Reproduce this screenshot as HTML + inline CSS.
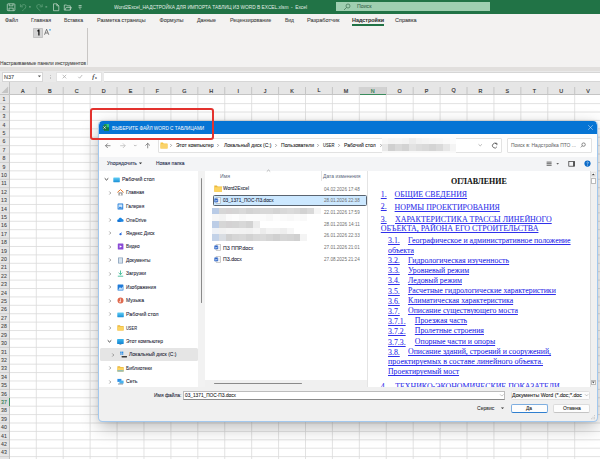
<!DOCTYPE html><html><head><meta charset="utf-8"><style>html,body{margin:0;padding:0;width:600px;height:459px;overflow:hidden;position:relative;background:#fff;font-family:"Liberation Sans",sans-serif}</style></head><body>
<div style="position:absolute;left:0px;top:0px;width:600px;height:14px;background:#217346"></div>
<div style="position:absolute;left:0px;top:14px;width:600px;height:53px;background:#f3f2f1"></div>
<div style="position:absolute;left:0px;top:67px;width:600px;height:4px;background:#e1dfdd"></div>
<div style="position:absolute;left:0px;top:71px;width:600px;height:11.5px;background:#eaeaea"></div>
<div style="position:absolute;left:0px;top:82px;width:600px;height:377px;background:#ffffff"></div>
<div style="position:absolute;left:0px;top:82px;width:600px;height:12.5px;background:#e6e6e6"></div>
<div style="position:absolute;left:0px;top:82px;width:9.5px;height:377px;background:#e6e6e6"></div>
<svg style="position:absolute;left:0;top:0" width="600" height="459"><line x1="9.38" y1="94.5" x2="9.38" y2="459" stroke="#dadada" stroke-width="0.8"/><line x1="9.38" y1="87" x2="9.38" y2="94.5" stroke="#bdbdbd" stroke-width="0.8"/><line x1="36.30" y1="94.5" x2="36.30" y2="459" stroke="#dadada" stroke-width="0.8"/><line x1="36.30" y1="87" x2="36.30" y2="94.5" stroke="#bdbdbd" stroke-width="0.8"/><line x1="63.22" y1="94.5" x2="63.22" y2="459" stroke="#dadada" stroke-width="0.8"/><line x1="63.22" y1="87" x2="63.22" y2="94.5" stroke="#bdbdbd" stroke-width="0.8"/><line x1="90.14" y1="94.5" x2="90.14" y2="459" stroke="#dadada" stroke-width="0.8"/><line x1="90.14" y1="87" x2="90.14" y2="94.5" stroke="#bdbdbd" stroke-width="0.8"/><line x1="117.06" y1="94.5" x2="117.06" y2="459" stroke="#dadada" stroke-width="0.8"/><line x1="117.06" y1="87" x2="117.06" y2="94.5" stroke="#bdbdbd" stroke-width="0.8"/><line x1="143.98" y1="94.5" x2="143.98" y2="459" stroke="#dadada" stroke-width="0.8"/><line x1="143.98" y1="87" x2="143.98" y2="94.5" stroke="#bdbdbd" stroke-width="0.8"/><line x1="170.90" y1="94.5" x2="170.90" y2="459" stroke="#dadada" stroke-width="0.8"/><line x1="170.90" y1="87" x2="170.90" y2="94.5" stroke="#bdbdbd" stroke-width="0.8"/><line x1="197.82" y1="94.5" x2="197.82" y2="459" stroke="#dadada" stroke-width="0.8"/><line x1="197.82" y1="87" x2="197.82" y2="94.5" stroke="#bdbdbd" stroke-width="0.8"/><line x1="224.74" y1="94.5" x2="224.74" y2="459" stroke="#dadada" stroke-width="0.8"/><line x1="224.74" y1="87" x2="224.74" y2="94.5" stroke="#bdbdbd" stroke-width="0.8"/><line x1="251.66" y1="94.5" x2="251.66" y2="459" stroke="#dadada" stroke-width="0.8"/><line x1="251.66" y1="87" x2="251.66" y2="94.5" stroke="#bdbdbd" stroke-width="0.8"/><line x1="278.58" y1="94.5" x2="278.58" y2="459" stroke="#dadada" stroke-width="0.8"/><line x1="278.58" y1="87" x2="278.58" y2="94.5" stroke="#bdbdbd" stroke-width="0.8"/><line x1="305.50" y1="94.5" x2="305.50" y2="459" stroke="#dadada" stroke-width="0.8"/><line x1="305.50" y1="87" x2="305.50" y2="94.5" stroke="#bdbdbd" stroke-width="0.8"/><line x1="332.42" y1="94.5" x2="332.42" y2="459" stroke="#dadada" stroke-width="0.8"/><line x1="332.42" y1="87" x2="332.42" y2="94.5" stroke="#bdbdbd" stroke-width="0.8"/><line x1="359.34" y1="94.5" x2="359.34" y2="459" stroke="#dadada" stroke-width="0.8"/><line x1="359.34" y1="87" x2="359.34" y2="94.5" stroke="#bdbdbd" stroke-width="0.8"/><line x1="386.26" y1="94.5" x2="386.26" y2="459" stroke="#dadada" stroke-width="0.8"/><line x1="386.26" y1="87" x2="386.26" y2="94.5" stroke="#bdbdbd" stroke-width="0.8"/><line x1="413.18" y1="94.5" x2="413.18" y2="459" stroke="#dadada" stroke-width="0.8"/><line x1="413.18" y1="87" x2="413.18" y2="94.5" stroke="#bdbdbd" stroke-width="0.8"/><line x1="440.10" y1="94.5" x2="440.10" y2="459" stroke="#dadada" stroke-width="0.8"/><line x1="440.10" y1="87" x2="440.10" y2="94.5" stroke="#bdbdbd" stroke-width="0.8"/><line x1="467.02" y1="94.5" x2="467.02" y2="459" stroke="#dadada" stroke-width="0.8"/><line x1="467.02" y1="87" x2="467.02" y2="94.5" stroke="#bdbdbd" stroke-width="0.8"/><line x1="493.94" y1="94.5" x2="493.94" y2="459" stroke="#dadada" stroke-width="0.8"/><line x1="493.94" y1="87" x2="493.94" y2="94.5" stroke="#bdbdbd" stroke-width="0.8"/><line x1="520.86" y1="94.5" x2="520.86" y2="459" stroke="#dadada" stroke-width="0.8"/><line x1="520.86" y1="87" x2="520.86" y2="94.5" stroke="#bdbdbd" stroke-width="0.8"/><line x1="547.78" y1="94.5" x2="547.78" y2="459" stroke="#dadada" stroke-width="0.8"/><line x1="547.78" y1="87" x2="547.78" y2="94.5" stroke="#bdbdbd" stroke-width="0.8"/><line x1="574.70" y1="94.5" x2="574.70" y2="459" stroke="#dadada" stroke-width="0.8"/><line x1="574.70" y1="87" x2="574.70" y2="94.5" stroke="#bdbdbd" stroke-width="0.8"/><line x1="601.62" y1="94.5" x2="601.62" y2="459" stroke="#dadada" stroke-width="0.8"/><line x1="601.62" y1="87" x2="601.62" y2="94.5" stroke="#bdbdbd" stroke-width="0.8"/><line x1="9.5" y1="103.61" x2="600" y2="103.61" stroke="#dadada" stroke-width="0.8"/><line x1="0" y1="103.61" x2="9.5" y2="103.61" stroke="#c8c8c8" stroke-width="0.8"/><line x1="9.5" y1="112.01" x2="600" y2="112.01" stroke="#dadada" stroke-width="0.8"/><line x1="0" y1="112.01" x2="9.5" y2="112.01" stroke="#c8c8c8" stroke-width="0.8"/><line x1="9.5" y1="120.41" x2="600" y2="120.41" stroke="#dadada" stroke-width="0.8"/><line x1="0" y1="120.41" x2="9.5" y2="120.41" stroke="#c8c8c8" stroke-width="0.8"/><line x1="9.5" y1="128.82" x2="600" y2="128.82" stroke="#dadada" stroke-width="0.8"/><line x1="0" y1="128.82" x2="9.5" y2="128.82" stroke="#c8c8c8" stroke-width="0.8"/><line x1="9.5" y1="137.22" x2="600" y2="137.22" stroke="#dadada" stroke-width="0.8"/><line x1="0" y1="137.22" x2="9.5" y2="137.22" stroke="#c8c8c8" stroke-width="0.8"/><line x1="9.5" y1="145.63" x2="600" y2="145.63" stroke="#dadada" stroke-width="0.8"/><line x1="0" y1="145.63" x2="9.5" y2="145.63" stroke="#c8c8c8" stroke-width="0.8"/><line x1="9.5" y1="154.03" x2="600" y2="154.03" stroke="#dadada" stroke-width="0.8"/><line x1="0" y1="154.03" x2="9.5" y2="154.03" stroke="#c8c8c8" stroke-width="0.8"/><line x1="9.5" y1="162.44" x2="600" y2="162.44" stroke="#dadada" stroke-width="0.8"/><line x1="0" y1="162.44" x2="9.5" y2="162.44" stroke="#c8c8c8" stroke-width="0.8"/><line x1="9.5" y1="170.84" x2="600" y2="170.84" stroke="#dadada" stroke-width="0.8"/><line x1="0" y1="170.84" x2="9.5" y2="170.84" stroke="#c8c8c8" stroke-width="0.8"/><line x1="9.5" y1="179.25" x2="600" y2="179.25" stroke="#dadada" stroke-width="0.8"/><line x1="0" y1="179.25" x2="9.5" y2="179.25" stroke="#c8c8c8" stroke-width="0.8"/><line x1="9.5" y1="187.66" x2="600" y2="187.66" stroke="#dadada" stroke-width="0.8"/><line x1="0" y1="187.66" x2="9.5" y2="187.66" stroke="#c8c8c8" stroke-width="0.8"/><line x1="9.5" y1="196.06" x2="600" y2="196.06" stroke="#dadada" stroke-width="0.8"/><line x1="0" y1="196.06" x2="9.5" y2="196.06" stroke="#c8c8c8" stroke-width="0.8"/><line x1="9.5" y1="204.46" x2="600" y2="204.46" stroke="#dadada" stroke-width="0.8"/><line x1="0" y1="204.46" x2="9.5" y2="204.46" stroke="#c8c8c8" stroke-width="0.8"/><line x1="9.5" y1="212.87" x2="600" y2="212.87" stroke="#dadada" stroke-width="0.8"/><line x1="0" y1="212.87" x2="9.5" y2="212.87" stroke="#c8c8c8" stroke-width="0.8"/><line x1="9.5" y1="221.27" x2="600" y2="221.27" stroke="#dadada" stroke-width="0.8"/><line x1="0" y1="221.27" x2="9.5" y2="221.27" stroke="#c8c8c8" stroke-width="0.8"/><line x1="9.5" y1="229.68" x2="600" y2="229.68" stroke="#dadada" stroke-width="0.8"/><line x1="0" y1="229.68" x2="9.5" y2="229.68" stroke="#c8c8c8" stroke-width="0.8"/><line x1="9.5" y1="238.08" x2="600" y2="238.08" stroke="#dadada" stroke-width="0.8"/><line x1="0" y1="238.08" x2="9.5" y2="238.08" stroke="#c8c8c8" stroke-width="0.8"/><line x1="9.5" y1="246.49" x2="600" y2="246.49" stroke="#dadada" stroke-width="0.8"/><line x1="0" y1="246.49" x2="9.5" y2="246.49" stroke="#c8c8c8" stroke-width="0.8"/><line x1="9.5" y1="254.89" x2="600" y2="254.89" stroke="#dadada" stroke-width="0.8"/><line x1="0" y1="254.89" x2="9.5" y2="254.89" stroke="#c8c8c8" stroke-width="0.8"/><line x1="9.5" y1="263.30" x2="600" y2="263.30" stroke="#dadada" stroke-width="0.8"/><line x1="0" y1="263.30" x2="9.5" y2="263.30" stroke="#c8c8c8" stroke-width="0.8"/><line x1="9.5" y1="271.70" x2="600" y2="271.70" stroke="#dadada" stroke-width="0.8"/><line x1="0" y1="271.70" x2="9.5" y2="271.70" stroke="#c8c8c8" stroke-width="0.8"/><line x1="9.5" y1="280.11" x2="600" y2="280.11" stroke="#dadada" stroke-width="0.8"/><line x1="0" y1="280.11" x2="9.5" y2="280.11" stroke="#c8c8c8" stroke-width="0.8"/><line x1="9.5" y1="288.51" x2="600" y2="288.51" stroke="#dadada" stroke-width="0.8"/><line x1="0" y1="288.51" x2="9.5" y2="288.51" stroke="#c8c8c8" stroke-width="0.8"/><line x1="9.5" y1="296.92" x2="600" y2="296.92" stroke="#dadada" stroke-width="0.8"/><line x1="0" y1="296.92" x2="9.5" y2="296.92" stroke="#c8c8c8" stroke-width="0.8"/><line x1="9.5" y1="305.32" x2="600" y2="305.32" stroke="#dadada" stroke-width="0.8"/><line x1="0" y1="305.32" x2="9.5" y2="305.32" stroke="#c8c8c8" stroke-width="0.8"/><line x1="9.5" y1="313.73" x2="600" y2="313.73" stroke="#dadada" stroke-width="0.8"/><line x1="0" y1="313.73" x2="9.5" y2="313.73" stroke="#c8c8c8" stroke-width="0.8"/><line x1="9.5" y1="322.13" x2="600" y2="322.13" stroke="#dadada" stroke-width="0.8"/><line x1="0" y1="322.13" x2="9.5" y2="322.13" stroke="#c8c8c8" stroke-width="0.8"/><line x1="9.5" y1="330.54" x2="600" y2="330.54" stroke="#dadada" stroke-width="0.8"/><line x1="0" y1="330.54" x2="9.5" y2="330.54" stroke="#c8c8c8" stroke-width="0.8"/><line x1="9.5" y1="338.94" x2="600" y2="338.94" stroke="#dadada" stroke-width="0.8"/><line x1="0" y1="338.94" x2="9.5" y2="338.94" stroke="#c8c8c8" stroke-width="0.8"/><line x1="9.5" y1="347.35" x2="600" y2="347.35" stroke="#dadada" stroke-width="0.8"/><line x1="0" y1="347.35" x2="9.5" y2="347.35" stroke="#c8c8c8" stroke-width="0.8"/><line x1="9.5" y1="355.75" x2="600" y2="355.75" stroke="#dadada" stroke-width="0.8"/><line x1="0" y1="355.75" x2="9.5" y2="355.75" stroke="#c8c8c8" stroke-width="0.8"/><line x1="9.5" y1="364.16" x2="600" y2="364.16" stroke="#dadada" stroke-width="0.8"/><line x1="0" y1="364.16" x2="9.5" y2="364.16" stroke="#c8c8c8" stroke-width="0.8"/><line x1="9.5" y1="372.56" x2="600" y2="372.56" stroke="#dadada" stroke-width="0.8"/><line x1="0" y1="372.56" x2="9.5" y2="372.56" stroke="#c8c8c8" stroke-width="0.8"/><line x1="9.5" y1="380.97" x2="600" y2="380.97" stroke="#dadada" stroke-width="0.8"/><line x1="0" y1="380.97" x2="9.5" y2="380.97" stroke="#c8c8c8" stroke-width="0.8"/><line x1="9.5" y1="389.37" x2="600" y2="389.37" stroke="#dadada" stroke-width="0.8"/><line x1="0" y1="389.37" x2="9.5" y2="389.37" stroke="#c8c8c8" stroke-width="0.8"/><line x1="9.5" y1="397.78" x2="600" y2="397.78" stroke="#dadada" stroke-width="0.8"/><line x1="0" y1="397.78" x2="9.5" y2="397.78" stroke="#c8c8c8" stroke-width="0.8"/><line x1="9.5" y1="406.18" x2="600" y2="406.18" stroke="#dadada" stroke-width="0.8"/><line x1="0" y1="406.18" x2="9.5" y2="406.18" stroke="#c8c8c8" stroke-width="0.8"/><line x1="9.5" y1="414.59" x2="600" y2="414.59" stroke="#dadada" stroke-width="0.8"/><line x1="0" y1="414.59" x2="9.5" y2="414.59" stroke="#c8c8c8" stroke-width="0.8"/><line x1="9.5" y1="422.99" x2="600" y2="422.99" stroke="#dadada" stroke-width="0.8"/><line x1="0" y1="422.99" x2="9.5" y2="422.99" stroke="#c8c8c8" stroke-width="0.8"/><line x1="9.5" y1="431.40" x2="600" y2="431.40" stroke="#dadada" stroke-width="0.8"/><line x1="0" y1="431.40" x2="9.5" y2="431.40" stroke="#c8c8c8" stroke-width="0.8"/><line x1="9.5" y1="439.80" x2="600" y2="439.80" stroke="#dadada" stroke-width="0.8"/><line x1="0" y1="439.80" x2="9.5" y2="439.80" stroke="#c8c8c8" stroke-width="0.8"/><line x1="9.5" y1="448.21" x2="600" y2="448.21" stroke="#dadada" stroke-width="0.8"/><line x1="0" y1="448.21" x2="9.5" y2="448.21" stroke="#c8c8c8" stroke-width="0.8"/><line x1="9.5" y1="456.61" x2="600" y2="456.61" stroke="#dadada" stroke-width="0.8"/><line x1="0" y1="456.61" x2="9.5" y2="456.61" stroke="#c8c8c8" stroke-width="0.8"/><line x1="9.5" y1="465.02" x2="600" y2="465.02" stroke="#dadada" stroke-width="0.8"/><line x1="0" y1="465.02" x2="9.5" y2="465.02" stroke="#c8c8c8" stroke-width="0.8"/><line x1="9.5" y1="82" x2="9.5" y2="459" stroke="#bdbdbd" stroke-width="0.8"/><line x1="0" y1="94.5" x2="600" y2="94.5" stroke="#c4c4c4" stroke-width="1.0"/><path d="M8 86.5 L8 93 L1.5 93 Z" fill="#c4c4c4"/></svg>
<div style="position:absolute;left:359.34000000000003px;top:86.8px;width:26.92px;height:7.7px;background:#d2d2d2"></div>
<div style="position:absolute;left:359.64000000000004px;top:93.5px;width:26.32px;height:1.0px;background:#3b8b5d"></div>
<div style="position:absolute;left:0px;top:397.78px;width:9.5px;height:8.405px;background:#d9d9d9"></div>
<div style="position:absolute;left:8.8px;top:398.17999999999995px;width:1.0px;height:7.805px;background:#3f9464"></div>
<div style="position:absolute;left:-7.16px;width:60px;text-align:center;top:88.72px;font-family:'Liberation Sans',sans-serif;font-weight:400;color:#333;font-size:5.400px;line-height:5.400px;white-space:pre;-webkit-text-stroke:0.18px #333;">A</div>
<div style="position:absolute;left:19.76px;width:60px;text-align:center;top:88.92px;font-family:'Liberation Sans',sans-serif;font-weight:400;color:#333;font-size:5.400px;line-height:5.400px;white-space:pre;-webkit-text-stroke:0.18px #333;">B</div>
<div style="position:absolute;left:46.68px;width:60px;text-align:center;top:88.83px;font-family:'Liberation Sans',sans-serif;font-weight:400;color:#333;font-size:5.400px;line-height:5.400px;white-space:pre;-webkit-text-stroke:0.18px #333;">C</div>
<div style="position:absolute;left:73.60px;width:60px;text-align:center;top:88.86px;font-family:'Liberation Sans',sans-serif;font-weight:400;color:#333;font-size:5.400px;line-height:5.400px;white-space:pre;-webkit-text-stroke:0.18px #333;">D</div>
<div style="position:absolute;left:100.52px;width:60px;text-align:center;top:88.77px;font-family:'Liberation Sans',sans-serif;font-weight:400;color:#333;font-size:5.400px;line-height:5.400px;white-space:pre;-webkit-text-stroke:0.18px #333;">E</div>
<div style="position:absolute;left:127.44px;width:60px;text-align:center;top:89.20px;font-family:'Liberation Sans',sans-serif;font-weight:400;color:#333;font-size:5.400px;line-height:5.400px;white-space:pre;-webkit-text-stroke:0.18px #333;">F</div>
<div style="position:absolute;left:154.36px;width:60px;text-align:center;top:88.80px;font-family:'Liberation Sans',sans-serif;font-weight:400;color:#333;font-size:5.400px;line-height:5.400px;white-space:pre;-webkit-text-stroke:0.18px #333;">G</div>
<div style="position:absolute;left:181.28px;width:60px;text-align:center;top:88.81px;font-family:'Liberation Sans',sans-serif;font-weight:400;color:#333;font-size:5.400px;line-height:5.400px;white-space:pre;-webkit-text-stroke:0.18px #333;">H</div>
<div style="position:absolute;left:208.20px;width:60px;text-align:center;top:88.90px;font-family:'Liberation Sans',sans-serif;font-weight:400;color:#333;font-size:5.400px;line-height:5.400px;white-space:pre;-webkit-text-stroke:0.18px #333;">I</div>
<div style="position:absolute;left:235.12px;width:60px;text-align:center;top:88.74px;font-family:'Liberation Sans',sans-serif;font-weight:400;color:#333;font-size:5.400px;line-height:5.400px;white-space:pre;-webkit-text-stroke:0.18px #333;">J</div>
<div style="position:absolute;left:262.04px;width:60px;text-align:center;top:88.89px;font-family:'Liberation Sans',sans-serif;font-weight:400;color:#333;font-size:5.400px;line-height:5.400px;white-space:pre;-webkit-text-stroke:0.18px #333;">K</div>
<div style="position:absolute;left:288.96px;width:60px;text-align:center;top:88.46px;font-family:'Liberation Sans',sans-serif;font-weight:400;color:#333;font-size:5.400px;line-height:5.400px;white-space:pre;-webkit-text-stroke:0.18px #333;">L</div>
<div style="position:absolute;left:315.88px;width:60px;text-align:center;top:88.87px;font-family:'Liberation Sans',sans-serif;font-weight:400;color:#333;font-size:5.400px;line-height:5.400px;white-space:pre;-webkit-text-stroke:0.18px #333;">M</div>
<div style="position:absolute;left:342.80px;width:60px;text-align:center;top:88.89px;font-family:'Liberation Sans',sans-serif;font-weight:400;color:#2f7d52;font-size:5.400px;line-height:5.400px;white-space:pre;-webkit-text-stroke:0.18px #2f7d52;">N</div>
<div style="position:absolute;left:369.72px;width:60px;text-align:center;top:88.89px;font-family:'Liberation Sans',sans-serif;font-weight:400;color:#333;font-size:5.400px;line-height:5.400px;white-space:pre;-webkit-text-stroke:0.18px #333;">O</div>
<div style="position:absolute;left:396.64px;width:60px;text-align:center;top:89.23px;font-family:'Liberation Sans',sans-serif;font-weight:400;color:#333;font-size:5.400px;line-height:5.400px;white-space:pre;-webkit-text-stroke:0.18px #333;">P</div>
<div style="position:absolute;left:423.56px;width:60px;text-align:center;top:87.98px;font-family:'Liberation Sans',sans-serif;font-weight:400;color:#333;font-size:5.400px;line-height:5.400px;white-space:pre;-webkit-text-stroke:0.18px #333;">Q</div>
<div style="position:absolute;left:450.48px;width:60px;text-align:center;top:89.02px;font-family:'Liberation Sans',sans-serif;font-weight:400;color:#333;font-size:5.400px;line-height:5.400px;white-space:pre;-webkit-text-stroke:0.18px #333;">R</div>
<div style="position:absolute;left:477.40px;width:60px;text-align:center;top:88.79px;font-family:'Liberation Sans',sans-serif;font-weight:400;color:#333;font-size:5.400px;line-height:5.400px;white-space:pre;-webkit-text-stroke:0.18px #333;">S</div>
<div style="position:absolute;left:504.32px;width:60px;text-align:center;top:89.45px;font-family:'Liberation Sans',sans-serif;font-weight:400;color:#333;font-size:5.400px;line-height:5.400px;white-space:pre;-webkit-text-stroke:0.18px #333;">T</div>
<div style="position:absolute;left:531.24px;width:60px;text-align:center;top:88.78px;font-family:'Liberation Sans',sans-serif;font-weight:400;color:#333;font-size:5.400px;line-height:5.400px;white-space:pre;-webkit-text-stroke:0.18px #333;">U</div>
<div style="position:absolute;left:558.16px;width:60px;text-align:center;top:89.00px;font-family:'Liberation Sans',sans-serif;font-weight:400;color:#333;font-size:5.400px;line-height:5.400px;white-space:pre;-webkit-text-stroke:0.18px #333;">V</div>
<div style="position:absolute;left:585.08px;width:60px;text-align:center;top:88.95px;font-family:'Liberation Sans',sans-serif;font-weight:400;color:#333;font-size:5.400px;line-height:5.400px;white-space:pre;-webkit-text-stroke:0.18px #333;">W</div>
<div style="position:absolute;left:-26.10px;width:60px;text-align:center;top:97.01px;font-family:'Liberation Sans',sans-serif;font-weight:400;color:#444;font-size:5.200px;line-height:5.200px;white-space:pre;-webkit-text-stroke:0.08px #444;">1</div>
<div style="position:absolute;left:-26.10px;width:60px;text-align:center;top:105.93px;font-family:'Liberation Sans',sans-serif;font-weight:400;color:#444;font-size:5.200px;line-height:5.200px;white-space:pre;-webkit-text-stroke:0.08px #444;">2</div>
<div style="position:absolute;left:-26.10px;width:60px;text-align:center;top:113.88px;font-family:'Liberation Sans',sans-serif;font-weight:400;color:#444;font-size:5.200px;line-height:5.200px;white-space:pre;-webkit-text-stroke:0.08px #444;">3</div>
<div style="position:absolute;left:-26.10px;width:60px;text-align:center;top:122.67px;font-family:'Liberation Sans',sans-serif;font-weight:400;color:#444;font-size:5.200px;line-height:5.200px;white-space:pre;-webkit-text-stroke:0.08px #444;">4</div>
<div style="position:absolute;left:-26.10px;width:60px;text-align:center;top:131.43px;font-family:'Liberation Sans',sans-serif;font-weight:400;color:#444;font-size:5.200px;line-height:5.200px;white-space:pre;-webkit-text-stroke:0.08px #444;">5</div>
<div style="position:absolute;left:-26.10px;width:60px;text-align:center;top:139.16px;font-family:'Liberation Sans',sans-serif;font-weight:400;color:#444;font-size:5.200px;line-height:5.200px;white-space:pre;-webkit-text-stroke:0.08px #444;">6</div>
<div style="position:absolute;left:-26.10px;width:60px;text-align:center;top:148.48px;font-family:'Liberation Sans',sans-serif;font-weight:400;color:#444;font-size:5.200px;line-height:5.200px;white-space:pre;-webkit-text-stroke:0.08px #444;">7</div>
<div style="position:absolute;left:-26.10px;width:60px;text-align:center;top:155.90px;font-family:'Liberation Sans',sans-serif;font-weight:400;color:#444;font-size:5.200px;line-height:5.200px;white-space:pre;-webkit-text-stroke:0.08px #444;">8</div>
<div style="position:absolute;left:-26.10px;width:60px;text-align:center;top:164.73px;font-family:'Liberation Sans',sans-serif;font-weight:400;color:#444;font-size:5.200px;line-height:5.200px;white-space:pre;-webkit-text-stroke:0.08px #444;">9</div>
<div style="position:absolute;left:-26.10px;width:60px;text-align:center;top:173.38px;font-family:'Liberation Sans',sans-serif;font-weight:400;color:#444;font-size:5.200px;line-height:5.200px;white-space:pre;-webkit-text-stroke:0.08px #444;">10</div>
<div style="position:absolute;left:-26.10px;width:60px;text-align:center;top:181.12px;font-family:'Liberation Sans',sans-serif;font-weight:400;color:#444;font-size:5.200px;line-height:5.200px;white-space:pre;-webkit-text-stroke:0.08px #444;">11</div>
<div style="position:absolute;left:-26.10px;width:60px;text-align:center;top:189.98px;font-family:'Liberation Sans',sans-serif;font-weight:400;color:#444;font-size:5.200px;line-height:5.200px;white-space:pre;-webkit-text-stroke:0.08px #444;">12</div>
<div style="position:absolute;left:-26.10px;width:60px;text-align:center;top:197.88px;font-family:'Liberation Sans',sans-serif;font-weight:400;color:#444;font-size:5.200px;line-height:5.200px;white-space:pre;-webkit-text-stroke:0.08px #444;">13</div>
<div style="position:absolute;left:-26.10px;width:60px;text-align:center;top:206.67px;font-family:'Liberation Sans',sans-serif;font-weight:400;color:#444;font-size:5.200px;line-height:5.200px;white-space:pre;-webkit-text-stroke:0.08px #444;">14</div>
<div style="position:absolute;left:-26.10px;width:60px;text-align:center;top:215.45px;font-family:'Liberation Sans',sans-serif;font-weight:400;color:#444;font-size:5.200px;line-height:5.200px;white-space:pre;-webkit-text-stroke:0.08px #444;">15</div>
<div style="position:absolute;left:-26.10px;width:60px;text-align:center;top:223.21px;font-family:'Liberation Sans',sans-serif;font-weight:400;color:#444;font-size:5.200px;line-height:5.200px;white-space:pre;-webkit-text-stroke:0.08px #444;">16</div>
<div style="position:absolute;left:-26.10px;width:60px;text-align:center;top:232.27px;font-family:'Liberation Sans',sans-serif;font-weight:400;color:#444;font-size:5.200px;line-height:5.200px;white-space:pre;-webkit-text-stroke:0.08px #444;">17</div>
<div style="position:absolute;left:-26.10px;width:60px;text-align:center;top:239.92px;font-family:'Liberation Sans',sans-serif;font-weight:400;color:#444;font-size:5.200px;line-height:5.200px;white-space:pre;-webkit-text-stroke:0.08px #444;">18</div>
<div style="position:absolute;left:-26.10px;width:60px;text-align:center;top:248.74px;font-family:'Liberation Sans',sans-serif;font-weight:400;color:#444;font-size:5.200px;line-height:5.200px;white-space:pre;-webkit-text-stroke:0.08px #444;">19</div>
<div style="position:absolute;left:-26.10px;width:60px;text-align:center;top:256.51px;font-family:'Liberation Sans',sans-serif;font-weight:400;color:#444;font-size:5.200px;line-height:5.200px;white-space:pre;-webkit-text-stroke:0.08px #444;">20</div>
<div style="position:absolute;left:-26.10px;width:60px;text-align:center;top:265.27px;font-family:'Liberation Sans',sans-serif;font-weight:400;color:#444;font-size:5.200px;line-height:5.200px;white-space:pre;-webkit-text-stroke:0.08px #444;">21</div>
<div style="position:absolute;left:-26.10px;width:60px;text-align:center;top:274.12px;font-family:'Liberation Sans',sans-serif;font-weight:400;color:#444;font-size:5.200px;line-height:5.200px;white-space:pre;-webkit-text-stroke:0.08px #444;">22</div>
<div style="position:absolute;left:-26.10px;width:60px;text-align:center;top:282.01px;font-family:'Liberation Sans',sans-serif;font-weight:400;color:#444;font-size:5.200px;line-height:5.200px;white-space:pre;-webkit-text-stroke:0.08px #444;">23</div>
<div style="position:absolute;left:-26.10px;width:60px;text-align:center;top:290.80px;font-family:'Liberation Sans',sans-serif;font-weight:400;color:#444;font-size:5.200px;line-height:5.200px;white-space:pre;-webkit-text-stroke:0.08px #444;">24</div>
<div style="position:absolute;left:-26.10px;width:60px;text-align:center;top:298.58px;font-family:'Liberation Sans',sans-serif;font-weight:400;color:#444;font-size:5.200px;line-height:5.200px;white-space:pre;-webkit-text-stroke:0.08px #444;">25</div>
<div style="position:absolute;left:-26.10px;width:60px;text-align:center;top:307.35px;font-family:'Liberation Sans',sans-serif;font-weight:400;color:#444;font-size:5.200px;line-height:5.200px;white-space:pre;-webkit-text-stroke:0.08px #444;">26</div>
<div style="position:absolute;left:-26.10px;width:60px;text-align:center;top:316.40px;font-family:'Liberation Sans',sans-serif;font-weight:400;color:#444;font-size:5.200px;line-height:5.200px;white-space:pre;-webkit-text-stroke:0.08px #444;">27</div>
<div style="position:absolute;left:-26.10px;width:60px;text-align:center;top:324.05px;font-family:'Liberation Sans',sans-serif;font-weight:400;color:#444;font-size:5.200px;line-height:5.200px;white-space:pre;-webkit-text-stroke:0.08px #444;">28</div>
<div style="position:absolute;left:-26.10px;width:60px;text-align:center;top:332.87px;font-family:'Liberation Sans',sans-serif;font-weight:400;color:#444;font-size:5.200px;line-height:5.200px;white-space:pre;-webkit-text-stroke:0.08px #444;">29</div>
<div style="position:absolute;left:-26.10px;width:60px;text-align:center;top:340.69px;font-family:'Liberation Sans',sans-serif;font-weight:400;color:#444;font-size:5.200px;line-height:5.200px;white-space:pre;-webkit-text-stroke:0.08px #444;">30</div>
<div style="position:absolute;left:-26.10px;width:60px;text-align:center;top:349.96px;font-family:'Liberation Sans',sans-serif;font-weight:400;color:#444;font-size:5.200px;line-height:5.200px;white-space:pre;-webkit-text-stroke:0.08px #444;">31</div>
<div style="position:absolute;left:-26.10px;width:60px;text-align:center;top:358.30px;font-family:'Liberation Sans',sans-serif;font-weight:400;color:#444;font-size:5.200px;line-height:5.200px;white-space:pre;-webkit-text-stroke:0.08px #444;">32</div>
<div style="position:absolute;left:-26.10px;width:60px;text-align:center;top:366.19px;font-family:'Liberation Sans',sans-serif;font-weight:400;color:#444;font-size:5.200px;line-height:5.200px;white-space:pre;-webkit-text-stroke:0.08px #444;">33</div>
<div style="position:absolute;left:-26.10px;width:60px;text-align:center;top:374.99px;font-family:'Liberation Sans',sans-serif;font-weight:400;color:#444;font-size:5.200px;line-height:5.200px;white-space:pre;-webkit-text-stroke:0.08px #444;">34</div>
<div style="position:absolute;left:-26.10px;width:60px;text-align:center;top:382.76px;font-family:'Liberation Sans',sans-serif;font-weight:400;color:#444;font-size:5.200px;line-height:5.200px;white-space:pre;-webkit-text-stroke:0.08px #444;">35</div>
<div style="position:absolute;left:-26.10px;width:60px;text-align:center;top:391.52px;font-family:'Liberation Sans',sans-serif;font-weight:400;color:#444;font-size:5.200px;line-height:5.200px;white-space:pre;-webkit-text-stroke:0.08px #444;">36</div>
<div style="position:absolute;left:-26.10px;width:60px;text-align:center;top:399.78px;font-family:'Liberation Sans',sans-serif;font-weight:400;color:#217346;font-size:5.200px;line-height:5.200px;white-space:pre;-webkit-text-stroke:0.08px #217346;">37</div>
<div style="position:absolute;left:-26.10px;width:60px;text-align:center;top:408.22px;font-family:'Liberation Sans',sans-serif;font-weight:400;color:#444;font-size:5.200px;line-height:5.200px;white-space:pre;-webkit-text-stroke:0.08px #444;">38</div>
<div style="position:absolute;left:-26.10px;width:60px;text-align:center;top:417.04px;font-family:'Liberation Sans',sans-serif;font-weight:400;color:#444;font-size:5.200px;line-height:5.200px;white-space:pre;-webkit-text-stroke:0.08px #444;">39</div>
<div style="position:absolute;left:-26.10px;width:60px;text-align:center;top:424.77px;font-family:'Liberation Sans',sans-serif;font-weight:400;color:#444;font-size:5.200px;line-height:5.200px;white-space:pre;-webkit-text-stroke:0.08px #444;">40</div>
<div style="position:absolute;left:-26.10px;width:60px;text-align:center;top:433.54px;font-family:'Liberation Sans',sans-serif;font-weight:400;color:#444;font-size:5.200px;line-height:5.200px;white-space:pre;-webkit-text-stroke:0.08px #444;">41</div>
<div style="position:absolute;left:-26.10px;width:60px;text-align:center;top:442.39px;font-family:'Liberation Sans',sans-serif;font-weight:400;color:#444;font-size:5.200px;line-height:5.200px;white-space:pre;-webkit-text-stroke:0.08px #444;">42</div>
<div style="position:absolute;left:-26.10px;width:60px;text-align:center;top:450.27px;font-family:'Liberation Sans',sans-serif;font-weight:400;color:#444;font-size:5.200px;line-height:5.200px;white-space:pre;-webkit-text-stroke:0.08px #444;">43</div>
<div style="position:absolute;left:-26.10px;width:60px;text-align:center;top:459.07px;font-family:'Liberation Sans',sans-serif;font-weight:400;color:#444;font-size:5.200px;line-height:5.200px;white-space:pre;-webkit-text-stroke:0.08px #444;">44</div>
<div style="position:absolute;left:114.00px;top:4.31px;font-family:'Liberation Sans',sans-serif;font-weight:400;color:#e3eee7;font-size:6.000px;line-height:6.000px;white-space:pre;transform:scaleX(0.7980);transform-origin:0 0;">Word2Excel_НАДСТРОЙКА ДЛЯ ИМПОРТА ТАБЛИЦ ИЗ WORD В EXCEL.xlsm  -  Excel</div>
<div style="position:absolute;left:336.3px;top:2.1px;width:154.2px;height:9.2px;background:#9fcfb1"></div>
<div style="position:absolute;left:357.00px;top:4.04px;font-family:'Liberation Sans',sans-serif;font-weight:400;color:#3d6b50;font-size:5.500px;line-height:5.500px;white-space:pre;-webkit-text-stroke:0.08px #3d6b50;transform:scaleX(0.9514);transform-origin:0 0;">Поиск</div>
<svg style="position:absolute;left:0;top:0" width="100" height="14" fill="none" stroke="#c9ddd0" stroke-width="0.7">
<rect x="7.3" y="3.8" width="7.6" height="6.9" rx="0.8"/>
<path d="M9.2 3.8 v2 h3.8 v-2"/>
<path d="M9 10.7 v-2.6 h4.2 v2.6"/>
<g stroke="#6aa884" stroke-width="0.65"><path d="M20.4 4.2 L20.4 6.8 L23 6.8"/><path d="M20.7 6.5 C22.4 4.0, 26.2 3.8, 25.8 6.9 C25.6 8.4, 23.6 9.8, 22.2 10.8"/>
<path d="M42.2 4.2 L42.2 6.8 L39.6 6.8"/><path d="M41.9 6.5 C40.2 4.0, 36.4 3.8, 36.8 6.9 C37.0 8.4, 39.0 9.8, 40.4 10.8"/>
<path d="M29 6.9 h1.8 M45.4 6.9 h1.8" stroke="#8fbaa0" stroke-width="0.9"/></g>
<path d="M53.5 3.8 h3.3 l2 2 v4.9 h-5.3 z"/><path d="M56.8 3.8 v2 h2"/>
<path d="M64.3 5 h2.3 l0.7 0.8 h3 v4.3 h-6 z"/><path d="M65 10 l1.2 -2.6 h5.2 l-1.2 2.6"/>
<path d="M78.6 5.6 h3 M78.6 7.2 h3" stroke-width="0.8"/><path d="M79.3 8.6 l0.8 0.7 l0.8 -0.7" stroke-width="0.6"/>
</svg>
<svg style="position:absolute;left:340px;top:2px" width="14" height="10" fill="none" stroke="#3d7050" stroke-width="0.7">
<circle cx="8" cy="4" r="2"/><path d="M6.6 5.4 L4 8"/></svg>
<div style="position:absolute;left:5.00px;top:17.64px;font-family:'Liberation Sans',sans-serif;font-weight:400;color:#444;font-size:5.500px;line-height:5.500px;white-space:pre;-webkit-text-stroke:0.08px #444;transform:scaleX(0.9614);transform-origin:0 0;">Файл</div>
<div style="position:absolute;left:31.00px;top:18.34px;font-family:'Liberation Sans',sans-serif;font-weight:400;color:#444;font-size:5.500px;line-height:5.500px;white-space:pre;-webkit-text-stroke:0.08px #444;transform:scaleX(0.9554);transform-origin:0 0;">Главная</div>
<div style="position:absolute;left:64.00px;top:18.36px;font-family:'Liberation Sans',sans-serif;font-weight:400;color:#444;font-size:5.500px;line-height:5.500px;white-space:pre;-webkit-text-stroke:0.08px #444;transform:scaleX(0.9294);transform-origin:0 0;">Вставка</div>
<div style="position:absolute;left:96.50px;top:18.16px;font-family:'Liberation Sans',sans-serif;font-weight:400;color:#444;font-size:5.500px;line-height:5.500px;white-space:pre;-webkit-text-stroke:0.08px #444;transform:scaleX(0.9720);transform-origin:0 0;">Разметка страницы</div>
<div style="position:absolute;left:159.50px;top:18.12px;font-family:'Liberation Sans',sans-serif;font-weight:400;color:#444;font-size:5.500px;line-height:5.500px;white-space:pre;-webkit-text-stroke:0.08px #444;">Формулы</div>
<div style="position:absolute;left:197.00px;top:18.03px;font-family:'Liberation Sans',sans-serif;font-weight:400;color:#444;font-size:5.500px;line-height:5.500px;white-space:pre;-webkit-text-stroke:0.08px #444;transform:scaleX(0.9562);transform-origin:0 0;">Данные</div>
<div style="position:absolute;left:229.80px;top:18.18px;font-family:'Liberation Sans',sans-serif;font-weight:400;color:#444;font-size:5.500px;line-height:5.500px;white-space:pre;-webkit-text-stroke:0.08px #444;transform:scaleX(0.9701);transform-origin:0 0;">Рецензирование</div>
<div style="position:absolute;left:285.00px;top:18.26px;font-family:'Liberation Sans',sans-serif;font-weight:400;color:#444;font-size:5.500px;line-height:5.500px;white-space:pre;-webkit-text-stroke:0.08px #444;transform:scaleX(0.9045);transform-origin:0 0;">Вид</div>
<div style="position:absolute;left:306.50px;top:18.40px;font-family:'Liberation Sans',sans-serif;font-weight:400;color:#444;font-size:5.500px;line-height:5.500px;white-space:pre;-webkit-text-stroke:0.08px #444;transform:scaleX(1.0133);transform-origin:0 0;">Разработчик</div>
<div style="position:absolute;left:395.00px;top:18.20px;font-family:'Liberation Sans',sans-serif;font-weight:400;color:#444;font-size:5.500px;line-height:5.500px;white-space:pre;-webkit-text-stroke:0.08px #444;">Справка</div>
<div style="position:absolute;left:351.50px;top:18.18px;font-family:'Liberation Sans',sans-serif;font-weight:700;color:#333;font-size:5.500px;line-height:5.500px;white-space:pre;-webkit-text-stroke:0.08px #333;transform:scaleX(0.9866);transform-origin:0 0;">Надстройки</div>
<div style="position:absolute;left:351.5px;top:24.2px;width:32px;height:1.6px;background:#217346"></div>
<div style="position:absolute;left:33.25px;top:27.5px;width:9.75px;height:10.0px;background:#d3d3d3;border:0.6px solid #c2c2c2;box-sizing:border-box;border-radius:0.8px"></div>
<svg style="position:absolute;left:30px;top:26px" width="25" height="14">
<path d="M7.5 5.2 L8.9 4.0 L8.9 9.6" fill="none" stroke="#111" stroke-width="1.25" stroke-linejoin="round"/>
<path d="M14.5 8.8 L16.6 3.2 L18.8 8.8 M15.3 7.0 H17.9" fill="none" stroke="#5a5a5a" stroke-width="0.75"/>
<rect x="19.2" y="3.0" width="1.6" height="1.6" fill="#5eb3e6"/>
</svg>
<div style="position:absolute;left:87.3px;top:28px;width:0.8px;height:36.7px;background:#c8c6c4"></div>
<div style="position:absolute;left:0.00px;top:60.93px;font-family:'Liberation Sans',sans-serif;font-weight:400;color:#444;font-size:5.500px;line-height:5.500px;white-space:pre;-webkit-text-stroke:0.08px #444;transform:scaleX(0.8782);transform-origin:0 0;">Настраиваемые панели инструментов</div>
<div style="position:absolute;left:1.6px;top:71.8px;width:41.5px;height:10.2px;background:#fff;border:0.5px solid #d6d6d6;box-sizing:border-box"></div>
<div style="position:absolute;left:4.00px;top:75.31px;font-family:'Liberation Sans',sans-serif;font-weight:400;color:#444;font-size:5.500px;line-height:5.500px;white-space:pre;-webkit-text-stroke:0.08px #444;transform:scaleX(0.9911);transform-origin:0 0;">N37</div>
<svg style="position:absolute;left:37px;top:74px" width="5" height="5"><path d="M0.8 1.5 L4 1.5 L2.4 3.2 Z" fill="#555"/></svg>
<div style="position:absolute;left:49.6px;top:74.6px;width:0.9px;height:1.0px;background:#c4c4c4"></div>
<div style="position:absolute;left:49.6px;top:76.5px;width:0.9px;height:1.0px;background:#c4c4c4"></div>
<div style="position:absolute;left:49.6px;top:78.4px;width:0.9px;height:1.0px;background:#c4c4c4"></div>
<div style="position:absolute;left:56.4px;top:72.0px;width:45.4px;height:10.0px;background:#fff;border:0.5px solid #e2e2e2;box-sizing:border-box"></div>
<svg style="position:absolute;left:56px;top:71px" width="50" height="12" fill="none" stroke="#a8a8a8" stroke-width="0.75">
<path d="M6.6 3.8 L10.2 7.4 M10.2 3.8 L6.6 7.4"/><path d="M22.3 5.8 L23.6 7.2 L26.2 4"/></svg>
<div style="position:absolute;left:92.30px;top:73.75px;font-family:'Liberation Serif',serif;font-weight:400;color:#333;font-size:7.000px;line-height:7.000px;white-space:pre;font-style:italic;-webkit-text-stroke:0.15px #333;">f</div>
<div style="position:absolute;left:95.00px;top:76.79px;font-family:'Liberation Sans',sans-serif;font-weight:400;color:#444;font-size:3.600px;line-height:3.600px;white-space:pre;-webkit-text-stroke:0.1px #444;">x</div>
<div style="position:absolute;left:104px;top:71.8px;width:496px;height:10.2px;background:#fff;border-top:0.5px solid #d6d6d6;border-bottom:0.5px solid #d6d6d6;box-sizing:border-box"></div>
<div style="position:absolute;left:98.7px;top:121.0px;width:498.59999999999997px;height:300.0px;border-radius:4px;box-shadow:0 6px 18px rgba(0,0,0,0.28), 0 0 4px rgba(0,0,0,0.08);background:#f0f0f0"></div>
<div style="position:absolute;left:98.7px;top:121.0px;width:498.59999999999997px;height:12.8px;background:#0674d4;border-radius:4px 4px 0 0"></div>
<div style="position:absolute;left:98.7px;top:133.8px;width:498.59999999999997px;height:22.9px;background:#fdfdfd"></div>
<div style="position:absolute;left:98.7px;top:156.7px;width:498.59999999999997px;height:14.2px;background:#f3f4f6"></div>
<div style="position:absolute;left:98.7px;top:386.9px;width:498.59999999999997px;height:34.10000000000002px;background:#f0f0f0;border-radius:0 0 4px 4px"></div>
<div style="position:absolute;left:98.7px;top:170.9px;width:99.2px;height:216.0px;background:#fff"></div>
<div style="position:absolute;left:197.9px;top:170.9px;width:7.3px;height:216.0px;background:#f2f2f2"></div>
<div style="position:absolute;left:201.0px;top:177.6px;width:1.0px;height:125.4px;background:#8a8a8a;border-radius:0.5px"></div>
<div style="position:absolute;left:205.2px;top:170.9px;width:161.4px;height:208.7px;background:#fff"></div>
<div style="position:absolute;left:205.2px;top:379.6px;width:161.4px;height:7.3px;background:#f0f0f0"></div>
<div style="position:absolute;left:213.7px;top:382.6px;width:88.6px;height:1.0px;background:#8a8a8a;border-radius:0.5px"></div>
<div style="position:absolute;left:366.6px;top:170.6px;width:230.69999999999993px;height:216.1px;background:#fff"></div>
<div style="position:absolute;left:366.6px;top:170.6px;width:0.7px;height:216.1px;background:#e4e4e4"></div>
<div style="position:absolute;left:590.3px;top:170.6px;width:6.5px;height:216.1px;background:#f0f0f0;border-left:0.5px solid #dcdcdc;box-sizing:border-box"></div>
<div style="position:absolute;left:590.6px;top:171.5px;width:5.8px;height:5.5px;background:#fff;border:0.5px solid #e6e6e6;box-sizing:border-box"></div>
<svg style="position:absolute;left:590px;top:171px" width="7" height="7"><path d="M1.6 4.3 L3.3 2.4 L5.0 4.3 Z" fill="#444"/></svg>
<div style="position:absolute;left:590.8px;top:177.8px;width:5.6px;height:6.5px;background:#fff;border:0.5px solid #bbb;box-sizing:border-box"></div>
<div style="position:absolute;left:590.6px;top:379.8px;width:5.8px;height:5.6px;background:#fff;border:0.5px solid #bbb;box-sizing:border-box"></div>
<svg style="position:absolute;left:590px;top:379px" width="7" height="7"><path d="M1.8 2.6 L3.3 4.4 L4.8 2.6 Z" fill="#555"/></svg>
<div style="position:absolute;left:98.0px;top:120.8px;width:499.99999999999994px;height:300.8px;border:1.3px solid #a2c8ee;border-radius:4.5px;box-sizing:border-box;border-top-color:transparent"></div>
<svg style="position:absolute;left:102px;top:123px" width="8" height="9">
<rect x="2" y="1" width="5" height="6.7" rx="0.4" fill="#159a52"/><rect x="4.5" y="1" width="2.5" height="3.3" fill="#33c481"/><rect x="2" y="4.5" width="5" height="3.2" fill="#107c41"/>
<rect x="0.7" y="2.5" width="3.8" height="4" rx="0.3" fill="#1d6f42"/>
<path d="M1.5 3.3 L3.7 5.7 M3.7 3.3 L1.5 5.7" stroke="#fff" stroke-width="0.7"/></svg>
<div style="position:absolute;left:111.80px;top:124.73px;font-family:'Liberation Sans',sans-serif;font-weight:400;color:#f4f8fd;font-size:6.200px;line-height:6.200px;white-space:pre;-webkit-text-stroke:0.04px #f4f8fd;transform:scaleX(0.7622);transform-origin:0 0;">ВЫБЕРИТЕ ФАЙЛ WORD С ТАБЛИЦАМИ</div>
<svg style="position:absolute;left:586px;top:123px" width="9" height="9"><path d="M2.2 2.2 L6.8 6.8 M6.8 2.2 L2.2 6.8" stroke="#d6e6f7" stroke-width="0.55"/></svg>
<svg style="position:absolute;left:100px;top:138px" width="60" height="16" fill="none" stroke-width="0.6">
<path d="M5.5 7.7 h5 M7.8 5.4 L5.5 7.7 L7.8 10" stroke="#444"/>
<path d="M20.2 7.7 h5 M22.9 5.4 L25.2 7.7 L22.9 10" stroke="#aaa"/>
<path d="M34.1 6.9 L35.3 8.1 L36.5 6.9" stroke="#888"/>
<path d="M47.7 10.3 v-5 M45.4 7.6 L47.7 5.3 L50 7.6" stroke="#444"/>
</svg>
<div style="position:absolute;left:157.5px;top:138.0px;width:344.3px;height:14.6px;background:#fff;border:0.7px solid #e2e2e2;border-radius:1px;box-sizing:border-box"></div>
<svg style="position:absolute;left:159px;top:141px" width="10" height="9"><path d="M1.5 1.6 h2.4 l0.8 0.9 h3.8 v4.9 h-7 z" fill="#f6c543"/><rect x="1.5" y="3.1" width="7" height="4.3" fill="#fad36b"/></svg>
<div style="position:absolute;left:176.00px;top:142.79px;font-family:'Liberation Sans',sans-serif;font-weight:400;color:#222;font-size:5.500px;line-height:5.500px;white-space:pre;-webkit-text-stroke:0.08px #222;transform:scaleX(0.9142);transform-origin:0 0;">Этот компьютер</div>
<div style="position:absolute;left:223.60px;top:142.80px;font-family:'Liberation Sans',sans-serif;font-weight:400;color:#222;font-size:5.500px;line-height:5.500px;white-space:pre;-webkit-text-stroke:0.08px #222;transform:scaleX(0.9107);transform-origin:0 0;">Локальный диск (C:)</div>
<div style="position:absolute;left:281.00px;top:142.83px;font-family:'Liberation Sans',sans-serif;font-weight:400;color:#222;font-size:5.500px;line-height:5.500px;white-space:pre;-webkit-text-stroke:0.08px #222;transform:scaleX(0.9193);transform-origin:0 0;">Пользователи</div>
<div style="position:absolute;left:323.00px;top:143.23px;font-family:'Liberation Sans',sans-serif;font-weight:400;color:#222;font-size:5.500px;line-height:5.500px;white-space:pre;-webkit-text-stroke:0.08px #222;transform:scaleX(0.7460);transform-origin:0 0;">USER</div>
<div style="position:absolute;left:344.40px;top:142.99px;font-family:'Liberation Sans',sans-serif;font-weight:400;color:#222;font-size:5.500px;line-height:5.500px;white-space:pre;-webkit-text-stroke:0.08px #222;transform:scaleX(0.9153);transform-origin:0 0;">Рабочий стол</div>
<svg style="position:absolute;left:169px;top:143px" width="4" height="5"><path d="M1.3 1 L2.6 2.4 L1.3 3.8" fill="none" stroke="#555" stroke-width="0.5"/></svg>
<svg style="position:absolute;left:216.4px;top:143px" width="4" height="5"><path d="M1.3 1 L2.6 2.4 L1.3 3.8" fill="none" stroke="#555" stroke-width="0.5"/></svg>
<svg style="position:absolute;left:274px;top:143px" width="4" height="5"><path d="M1.3 1 L2.6 2.4 L1.3 3.8" fill="none" stroke="#555" stroke-width="0.5"/></svg>
<svg style="position:absolute;left:316.4px;top:143px" width="4" height="5"><path d="M1.3 1 L2.6 2.4 L1.3 3.8" fill="none" stroke="#555" stroke-width="0.5"/></svg>
<svg style="position:absolute;left:337px;top:143px" width="4" height="5"><path d="M1.3 1 L2.6 2.4 L1.3 3.8" fill="none" stroke="#555" stroke-width="0.5"/></svg>
<svg style="position:absolute;left:379px;top:143px" width="4" height="5"><path d="M1.3 1 L2.6 2.4 L1.3 3.8" fill="none" stroke="#555" stroke-width="0.5"/></svg>
<div style="position:absolute;left:381.5px;top:137.5px;width:6.8999999999999995px;height:6.7px;background:#f7f7f7"></div>
<div style="position:absolute;left:381.5px;top:144.2px;width:6.8999999999999995px;height:6.6px;background:#e9e9e9"></div>
<div style="position:absolute;left:381.5px;top:150.8px;width:6.8999999999999995px;height:2.2px;background:#f8f8f8"></div>
<div style="position:absolute;left:388.3px;top:137.5px;width:6.8999999999999995px;height:6.7px;background:#f4f4f4"></div>
<div style="position:absolute;left:388.3px;top:144.2px;width:6.8999999999999995px;height:6.6px;background:#d0d0d0"></div>
<div style="position:absolute;left:388.3px;top:150.8px;width:6.8999999999999995px;height:2.2px;background:#f8f8f8"></div>
<div style="position:absolute;left:395.1px;top:137.5px;width:6.8999999999999995px;height:6.7px;background:#f5f5f5"></div>
<div style="position:absolute;left:395.1px;top:144.2px;width:6.8999999999999995px;height:6.6px;background:#d9d9d9"></div>
<div style="position:absolute;left:395.1px;top:150.8px;width:6.8999999999999995px;height:2.2px;background:#f8f8f8"></div>
<div style="position:absolute;left:401.9px;top:137.5px;width:6.8999999999999995px;height:6.7px;background:#f3f3f3"></div>
<div style="position:absolute;left:401.9px;top:144.2px;width:6.8999999999999995px;height:6.6px;background:#d3d3d3"></div>
<div style="position:absolute;left:401.9px;top:150.8px;width:6.8999999999999995px;height:2.2px;background:#f8f8f8"></div>
<div style="position:absolute;left:408.7px;top:137.5px;width:6.8999999999999995px;height:6.7px;background:#ececec"></div>
<div style="position:absolute;left:408.7px;top:144.2px;width:6.8999999999999995px;height:6.6px;background:#e2e2e2"></div>
<div style="position:absolute;left:408.7px;top:150.8px;width:6.8999999999999995px;height:2.2px;background:#f8f8f8"></div>
<div style="position:absolute;left:415.5px;top:137.5px;width:6.8999999999999995px;height:6.7px;background:#f2f2f2"></div>
<div style="position:absolute;left:415.5px;top:144.2px;width:6.8999999999999995px;height:6.6px;background:#dcdcdc"></div>
<div style="position:absolute;left:415.5px;top:150.8px;width:6.8999999999999995px;height:2.2px;background:#f8f8f8"></div>
<div style="position:absolute;left:422.3px;top:137.5px;width:6.8999999999999995px;height:6.7px;background:#f4f4f4"></div>
<div style="position:absolute;left:422.3px;top:144.2px;width:6.8999999999999995px;height:6.6px;background:#d9d9d9"></div>
<div style="position:absolute;left:422.3px;top:150.8px;width:6.8999999999999995px;height:2.2px;background:#f8f8f8"></div>
<div style="position:absolute;left:429.1px;top:137.5px;width:6.8999999999999995px;height:6.7px;background:#f6f6f6"></div>
<div style="position:absolute;left:429.1px;top:144.2px;width:6.8999999999999995px;height:6.6px;background:#d4d4d4"></div>
<div style="position:absolute;left:429.1px;top:150.8px;width:6.8999999999999995px;height:2.2px;background:#f8f8f8"></div>
<div style="position:absolute;left:435.9px;top:137.5px;width:6.8999999999999995px;height:6.7px;background:#f7f7f7"></div>
<div style="position:absolute;left:435.9px;top:144.2px;width:6.8999999999999995px;height:6.6px;background:#dadada"></div>
<div style="position:absolute;left:435.9px;top:150.8px;width:6.8999999999999995px;height:2.2px;background:#f8f8f8"></div>
<div style="position:absolute;left:442.7px;top:137.5px;width:6.8999999999999995px;height:6.7px;background:#fafafa"></div>
<div style="position:absolute;left:442.7px;top:144.2px;width:6.8999999999999995px;height:6.6px;background:#e7e7e7"></div>
<div style="position:absolute;left:442.7px;top:150.8px;width:6.8999999999999995px;height:2.2px;background:#f8f8f8"></div>
<div style="position:absolute;left:449.5px;top:137.5px;width:6.8999999999999995px;height:6.7px;background:#fcfcfc"></div>
<div style="position:absolute;left:449.5px;top:144.2px;width:6.8999999999999995px;height:6.6px;background:#f4f4f4"></div>
<div style="position:absolute;left:449.5px;top:150.8px;width:6.8999999999999995px;height:2.2px;background:#f8f8f8"></div>
<svg style="position:absolute;left:475px;top:140px" width="25" height="11" fill="none" stroke-width="0.6">
<path d="M3.5 4.3 L5.2 5.9 L6.9 4.3" stroke="#8a8a8a"/>
<path d="M21.6 4.0 A2.4 2.4 0 1 0 21.9 6.8" stroke="#444" stroke-width="0.75"/><path d="M20.0 3.2 L22.0 3.3 L21.9 5.2" stroke="#444" stroke-width="0.7"/></svg>
<div style="position:absolute;left:507.3px;top:138.3px;width:84.5px;height:14.3px;background:#fff;border:0.7px solid #e2e2e2;border-radius:1px;box-sizing:border-box"></div>
<div style="position:absolute;left:511.00px;top:142.95px;font-family:'Liberation Sans',sans-serif;font-weight:400;color:#666;font-size:5.500px;line-height:5.500px;white-space:pre;-webkit-text-stroke:0.03px #666;transform:scaleX(0.9026);transform-origin:0 0;">Поиск в: Надстройка ПТО ...</div>
<svg style="position:absolute;left:579px;top:141px" width="8" height="8" fill="none" stroke="#444" stroke-width="0.6"><circle cx="4.6" cy="3.6" r="1.7"/><path d="M3.4 4.8 L1.8 6.4"/></svg>
<div style="position:absolute;left:106.80px;top:161.33px;font-family:'Liberation Sans',sans-serif;font-weight:400;color:#1b2a4a;font-size:5.500px;line-height:5.500px;white-space:pre;-webkit-text-stroke:0.08px #1b2a4a;transform:scaleX(0.9166);transform-origin:0 0;">Упорядочить</div>
<svg style="position:absolute;left:138px;top:161px" width="5" height="5"><path d="M0.9 1.6 L4.1 1.6 L2.5 3.2 Z" fill="#333"/></svg>
<div style="position:absolute;left:156.00px;top:161.42px;font-family:'Liberation Sans',sans-serif;font-weight:400;color:#1b2a4a;font-size:5.500px;line-height:5.500px;white-space:pre;-webkit-text-stroke:0.08px #1b2a4a;transform:scaleX(0.8890);transform-origin:0 0;">Новая папка</div>
<svg style="position:absolute;left:544px;top:158px" width="50" height="12">
<rect x="2.6" y="3.6" width="5" height="1" fill="#666"/><rect x="2.6" y="5.2" width="5" height="1" fill="#666"/><rect x="2.6" y="6.8" width="5" height="1" fill="#666"/>
<path d="M12.3 5.2 L15 5.2 L13.65 6.6 Z" fill="#333"/>
<rect x="24.8" y="3.6" width="5.6" height="4.6" fill="none" stroke="#333" stroke-width="0.7"/><rect x="29.2" y="3.6" width="1.2" height="4.6" fill="#333"/>
<circle cx="43.5" cy="5.6" r="3.1" fill="#0a6ac8"/><path d="M42.6 4.6 q0.9 -1.1 1.8 0 q0 0.7 -0.9 1.2 v0.6" stroke="#fff" stroke-width="0.6" fill="none"/><rect x="43.2" y="7" width="0.6" height="0.6" fill="#fff"/>
</svg>
<svg style="position:absolute;left:103.9px;top:176.9px" width="5" height="5"><path d="M1.0 1.6 L2.5 3.0 L4.0 1.6" fill="none" stroke="#3a3a3a" stroke-width="0.95" stroke-linecap="round" stroke-linejoin="round"/></svg>
<svg style="position:absolute;left:113.30px;top:175.90px" width="7" height="7"><defs><linearGradient id="gd" x1="0" y1="0" x2="0" y2="1"><stop offset="0" stop-color="#5fcdf5"/><stop offset="1" stop-color="#1a8fd6"/></linearGradient></defs><rect x="0.3" y="1.6" width="6.5" height="4.6" rx="0.4" fill="url(#gd)"/></svg>
<div style="position:absolute;left:122.20px;top:176.79px;font-family:'Liberation Sans',sans-serif;font-weight:400;color:#1e2536;font-size:5.500px;line-height:5.500px;white-space:pre;-webkit-text-stroke:0.08px #1e2536;transform:scaleX(0.9413);transform-origin:0 0;">Рабочий стол</div>
<svg style="position:absolute;left:107.5px;top:190.88px" width="4" height="4"><path d="M1.3 0.5 L2.8 2 L1.3 3.5" fill="none" stroke="#707070" stroke-width="0.65"/></svg>
<svg style="position:absolute;left:116.70px;top:189.38px" width="7" height="7"><path d="M0.4 3.4 L3.5 0.6 L6.6 3.4" fill="none" stroke="#e87a2c" stroke-width="1"/><rect x="1.4" y="3.3" width="4.2" height="3.2" fill="#9a9a9a"/><rect x="2.8" y="4.5" width="1.4" height="2" fill="#fff"/></svg>
<div style="position:absolute;left:125.80px;top:190.09px;font-family:'Liberation Sans',sans-serif;font-weight:400;color:#1e2536;font-size:5.500px;line-height:5.500px;white-space:pre;-webkit-text-stroke:0.08px #1e2536;transform:scaleX(0.8694);transform-origin:0 0;">Главная</div>
<svg style="position:absolute;left:116.70px;top:202.86px" width="7" height="7"><rect x="0.6" y="0.6" width="5.6" height="5.8" rx="0.5" fill="#1f7ad8"/><rect x="1.4" y="1.4" width="4" height="4.2" fill="#cfe6fb"/><path d="M1.4 5.6 L3 3.6 L4.2 4.8 L5.4 3.8 V5.6 Z" fill="#1f7ad8"/></svg>
<div style="position:absolute;left:125.80px;top:203.53px;font-family:'Liberation Sans',sans-serif;font-weight:400;color:#1e2536;font-size:5.500px;line-height:5.500px;white-space:pre;-webkit-text-stroke:0.08px #1e2536;transform:scaleX(0.8629);transform-origin:0 0;">Галерея</div>
<svg style="position:absolute;left:107.5px;top:217.84px" width="4" height="4"><path d="M1.3 0.5 L2.8 2 L1.3 3.5" fill="none" stroke="#707070" stroke-width="0.65"/></svg>
<svg style="position:absolute;left:116.70px;top:216.34px" width="7" height="7"><path d="M1.2 5.8 C-0.2 5.8 -0.2 3.6 1.4 3.6 C1.8 1.6 4.4 1.2 5.0 3.0 C6.8 2.8 7.2 5.8 5.6 5.8 Z" fill="#1b86e3"/><path d="M1.2 5.8 C0.6 5.8 0.4 4.6 1.4 4.2 L4.8 5.8 Z" fill="#0f64c8"/></svg>
<div style="position:absolute;left:125.80px;top:217.64px;font-family:'Liberation Sans',sans-serif;font-weight:400;color:#1e2536;font-size:5.500px;line-height:5.500px;white-space:pre;-webkit-text-stroke:0.08px #1e2536;transform:scaleX(0.8825);transform-origin:0 0;">OneDrive</div>
<svg style="position:absolute;left:107.5px;top:231.32px" width="4" height="4"><path d="M1.3 0.5 L2.8 2 L1.3 3.5" fill="none" stroke="#707070" stroke-width="0.65"/></svg>
<svg style="position:absolute;left:116.70px;top:229.82px" width="7" height="7"><circle cx="3.6" cy="4.2" r="1.1" fill="#2d6fe0"/><path d="M2.6 4.6 L4.6 2.4" stroke="#2d6fe0" stroke-width="0.6"/></svg>
<div style="position:absolute;left:125.80px;top:231.25px;font-family:'Liberation Sans',sans-serif;font-weight:400;color:#1e2536;font-size:5.500px;line-height:5.500px;white-space:pre;-webkit-text-stroke:0.08px #1e2536;transform:scaleX(0.8913);transform-origin:0 0;">Яндекс Диск</div>
<svg style="position:absolute;left:107.5px;top:244.8px" width="4" height="4"><path d="M1.3 0.5 L2.8 2 L1.3 3.5" fill="none" stroke="#707070" stroke-width="0.65"/></svg>
<svg style="position:absolute;left:116.70px;top:243.30px" width="7" height="7"><rect x="0.8" y="0.4" width="5.6" height="6.2" rx="0.6" fill="#8a4ad6"/><path d="M2.6 2.2 L5 3.5 L2.6 4.8 Z" fill="#fff"/></svg>
<div style="position:absolute;left:125.80px;top:244.37px;font-family:'Liberation Sans',sans-serif;font-weight:400;color:#1e2536;font-size:5.500px;line-height:5.500px;white-space:pre;-webkit-text-stroke:0.08px #1e2536;transform:scaleX(0.8526);transform-origin:0 0;">Видео</div>
<svg style="position:absolute;left:107.5px;top:258.28px" width="4" height="4"><path d="M1.3 0.5 L2.8 2 L1.3 3.5" fill="none" stroke="#707070" stroke-width="0.65"/></svg>
<svg style="position:absolute;left:116.70px;top:256.78px" width="7" height="7"><rect x="1" y="0.4" width="5" height="6.2" rx="0.4" fill="#8aa2bb"/><rect x="1.8" y="1.2" width="3.4" height="4.6" fill="#d6e2ee"/></svg>
<div style="position:absolute;left:125.80px;top:257.98px;font-family:'Liberation Sans',sans-serif;font-weight:400;color:#1e2536;font-size:5.500px;line-height:5.500px;white-space:pre;-webkit-text-stroke:0.08px #1e2536;transform:scaleX(0.8571);transform-origin:0 0;">Документы</div>
<svg style="position:absolute;left:107.5px;top:271.76px" width="4" height="4"><path d="M1.3 0.5 L2.8 2 L1.3 3.5" fill="none" stroke="#707070" stroke-width="0.65"/></svg>
<svg style="position:absolute;left:116.70px;top:270.26px" width="7" height="7"><path d="M3.5 0.5 V4.6 M1.6 2.8 L3.5 4.6 L5.4 2.8 M0.8 6.2 H6.2" fill="none" stroke="#2bb48a" stroke-width="0.8"/></svg>
<div style="position:absolute;left:125.80px;top:271.23px;font-family:'Liberation Sans',sans-serif;font-weight:400;color:#1e2536;font-size:5.500px;line-height:5.500px;white-space:pre;-webkit-text-stroke:0.08px #1e2536;transform:scaleX(0.9035);transform-origin:0 0;">Загрузки</div>
<svg style="position:absolute;left:107.5px;top:285.24px" width="4" height="4"><path d="M1.3 0.5 L2.8 2 L1.3 3.5" fill="none" stroke="#707070" stroke-width="0.65"/></svg>
<svg style="position:absolute;left:116.70px;top:283.74px" width="7" height="7"><rect x="0.6" y="0.6" width="5.8" height="5.8" rx="0.5" fill="#1f7ad8"/><path d="M1.2 5.8 L3 3 L4.2 4.4 L5.8 2.6 V5.8 Z" fill="#cfe6fb"/></svg>
<div style="position:absolute;left:125.80px;top:285.30px;font-family:'Liberation Sans',sans-serif;font-weight:400;color:#1e2536;font-size:5.500px;line-height:5.500px;white-space:pre;-webkit-text-stroke:0.08px #1e2536;transform:scaleX(0.8679);transform-origin:0 0;">Изображения</div>
<svg style="position:absolute;left:107.5px;top:298.72px" width="4" height="4"><path d="M1.3 0.5 L2.8 2 L1.3 3.5" fill="none" stroke="#707070" stroke-width="0.65"/></svg>
<svg style="position:absolute;left:116.70px;top:297.22px" width="7" height="7"><circle cx="3.5" cy="3.5" r="3" fill="#e06a4f"/><path d="M3.5 1.6 V4.6" stroke="#fff" stroke-width="0.6"/><circle cx="3" cy="4.8" r="0.7" fill="#fff"/></svg>
<div style="position:absolute;left:125.80px;top:298.21px;font-family:'Liberation Sans',sans-serif;font-weight:400;color:#1e2536;font-size:5.500px;line-height:5.500px;white-space:pre;-webkit-text-stroke:0.08px #1e2536;transform:scaleX(0.9252);transform-origin:0 0;">Музыка</div>
<svg style="position:absolute;left:107.5px;top:312.20000000000005px" width="4" height="4"><path d="M1.3 0.5 L2.8 2 L1.3 3.5" fill="none" stroke="#707070" stroke-width="0.65"/></svg>
<svg style="position:absolute;left:116.70px;top:310.70px" width="7" height="7"><defs><linearGradient id="gd" x1="0" y1="0" x2="0" y2="1"><stop offset="0" stop-color="#5fcdf5"/><stop offset="1" stop-color="#1a8fd6"/></linearGradient></defs><rect x="0.3" y="1.6" width="6.5" height="4.6" rx="0.4" fill="url(#gd)"/></svg>
<div style="position:absolute;left:125.80px;top:312.39px;font-family:'Liberation Sans',sans-serif;font-weight:400;color:#1e2536;font-size:5.500px;line-height:5.500px;white-space:pre;-webkit-text-stroke:0.08px #1e2536;transform:scaleX(0.9413);transform-origin:0 0;">Рабочий стол</div>
<svg style="position:absolute;left:107.5px;top:325.68px" width="4" height="4"><path d="M1.3 0.5 L2.8 2 L1.3 3.5" fill="none" stroke="#707070" stroke-width="0.65"/></svg>
<svg style="position:absolute;left:116.70px;top:324.18px" width="7" height="7"><path d="M0.4 1.2 h2.4 l0.8 0.8 h3 v4.4 h-6.2 z" fill="#e8b43a"/><rect x="0.4" y="2.6" width="6.2" height="3.8" fill="#fcd462"/></svg>
<div style="position:absolute;left:125.80px;top:325.58px;font-family:'Liberation Sans',sans-serif;font-weight:400;color:#1e2536;font-size:5.500px;line-height:5.500px;white-space:pre;-webkit-text-stroke:0.08px #1e2536;transform:scaleX(0.7198);transform-origin:0 0;">USER</div>
<svg style="position:absolute;left:107.0px;top:338.65999999999997px" width="5" height="5"><path d="M1.0 1.6 L2.5 3.0 L4.0 1.6" fill="none" stroke="#3a3a3a" stroke-width="0.95" stroke-linecap="round" stroke-linejoin="round"/></svg>
<svg style="position:absolute;left:116.70px;top:337.66px" width="7" height="7"><defs><linearGradient id="gpc" x1="0" y1="0" x2="0" y2="1"><stop offset="0" stop-color="#3cb8ec"/><stop offset="1" stop-color="#1583d2"/></linearGradient></defs><rect x="0.1" y="1.0" width="6.6" height="5.0" rx="0.4" fill="url(#gpc)"/><rect x="2.4" y="6.1" width="2" height="0.7" fill="#7a8a9a"/></svg>
<div style="position:absolute;left:125.80px;top:339.11px;font-family:'Liberation Sans',sans-serif;font-weight:400;color:#1e2536;font-size:5.500px;line-height:5.500px;white-space:pre;-webkit-text-stroke:0.08px #1e2536;transform:scaleX(0.8996);transform-origin:0 0;">Этот компьютер</div>
<div style="position:absolute;left:99.8px;top:348.44px;width:98.0px;height:12.6px;background:#e5e5e5;border-radius:1.5px"></div>
<svg style="position:absolute;left:110.9px;top:352.64px" width="4" height="4"><path d="M1.3 0.5 L2.8 2 L1.3 3.5" fill="none" stroke="#707070" stroke-width="0.65"/></svg>
<svg style="position:absolute;left:119.80px;top:351.14px" width="7" height="7"><rect x="1.6" y="5.0" width="5.4" height="1.4" rx="0.3" fill="#3a3a3a"/><rect x="0.2" y="0.6" width="1.4" height="1.4" fill="#2a8ee8"/><rect x="1.9" y="0.6" width="1.4" height="1.4" fill="#2a8ee8"/><rect x="0.2" y="2.3" width="1.4" height="1.4" fill="#2a8ee8"/><rect x="1.9" y="2.3" width="1.4" height="1.4" fill="#2a8ee8"/></svg>
<div style="position:absolute;left:128.90px;top:352.08px;font-family:'Liberation Sans',sans-serif;font-weight:400;color:#1e2536;font-size:5.500px;line-height:5.500px;white-space:pre;-webkit-text-stroke:0.08px #1e2536;transform:scaleX(0.9126);transform-origin:0 0;">Локальный диск (C:)</div>
<svg style="position:absolute;left:107.5px;top:366.12px" width="4" height="4"><path d="M1.3 0.5 L2.8 2 L1.3 3.5" fill="none" stroke="#707070" stroke-width="0.65"/></svg>
<svg style="position:absolute;left:116.70px;top:364.62px" width="7" height="7"><path d="M0.4 1.2 h2.4 l0.8 0.8 h3 v4.4 h-6.2 z" fill="#e8b43a"/><rect x="0.4" y="2.6" width="6.2" height="3.8" fill="#fcd462"/><rect x="0.4" y="5.4" width="6.2" height="1" fill="#56b0e6"/></svg>
<div style="position:absolute;left:126.00px;top:366.12px;font-family:'Liberation Sans',sans-serif;font-weight:400;color:#1e2536;font-size:5.500px;line-height:5.500px;white-space:pre;-webkit-text-stroke:0.08px #1e2536;transform:scaleX(0.8725);transform-origin:0 0;">Библиотеки</div>
<svg style="position:absolute;left:107.5px;top:379.6px" width="4" height="4"><path d="M1.3 0.5 L2.8 2 L1.3 3.5" fill="none" stroke="#707070" stroke-width="0.65"/></svg>
<svg style="position:absolute;left:116.70px;top:378.10px" width="7" height="7"><rect x="0.4" y="0.9" width="4" height="3" fill="#2a8ee8"/><rect x="2.4" y="2.6" width="4.2" height="3" fill="#49b3ef"/><rect x="1" y="5.6" width="5" height="0.8" fill="#6b7b8c"/></svg>
<div style="position:absolute;left:126.00px;top:379.08px;font-family:'Liberation Sans',sans-serif;font-weight:400;color:#1e2536;font-size:5.500px;line-height:5.500px;white-space:pre;-webkit-text-stroke:0.08px #1e2536;transform:scaleX(0.9401);transform-origin:0 0;">Сеть</div>
<div style="position:absolute;left:220.20px;top:173.77px;font-family:'Liberation Sans',sans-serif;font-weight:400;color:#5d6a80;font-size:5.500px;line-height:5.500px;white-space:pre;-webkit-text-stroke:0.02px #5d6a80;transform:scaleX(0.9334);transform-origin:0 0;">Имя</div>
<svg style="position:absolute;left:266px;top:169px" width="5" height="4"><path d="M0.8 2.6 L2.5 1 L4.2 2.6" fill="none" stroke="#777" stroke-width="0.5"/></svg>
<div style="position:absolute;left:320.6px;top:171.2px;width:0.6px;height:10px;background:#e5e5e5"></div>
<div style="position:absolute;left:323.30px;top:173.53px;font-family:'Liberation Sans',sans-serif;font-weight:400;color:#5d6a80;font-size:5.500px;line-height:5.500px;white-space:pre;-webkit-text-stroke:0.02px #5d6a80;transform:scaleX(0.9074);transform-origin:0 0;">Дата изменения</div>
<div style="position:absolute;left:212.7px;top:195.4px;width:154.3px;height:10.2px;background:#cce8ff;border:0.8px solid #5a6470;border-radius:1.5px;box-sizing:border-box"></div>
<div style="position:absolute;left:323.80px;top:186.93px;font-family:'Liberation Sans',sans-serif;font-weight:400;color:#707070;font-size:5.500px;line-height:5.500px;white-space:pre;-webkit-text-stroke:0.02px #707070;transform:scaleX(0.8338);transform-origin:0 0;">04.02.2026 17:48</div>
<div style="position:absolute;left:323.80px;top:197.84px;font-family:'Liberation Sans',sans-serif;font-weight:400;color:#707070;font-size:5.500px;line-height:5.500px;white-space:pre;-webkit-text-stroke:0.02px #707070;transform:scaleX(0.8338);transform-origin:0 0;">28.01.2026 22:38</div>
<div style="position:absolute;left:323.80px;top:210.36px;font-family:'Liberation Sans',sans-serif;font-weight:400;color:#707070;font-size:5.500px;line-height:5.500px;white-space:pre;-webkit-text-stroke:0.02px #707070;transform:scaleX(0.8338);transform-origin:0 0;">22.01.2026 17:59</div>
<div style="position:absolute;left:323.80px;top:221.80px;font-family:'Liberation Sans',sans-serif;font-weight:400;color:#707070;font-size:5.500px;line-height:5.500px;white-space:pre;-webkit-text-stroke:0.02px #707070;transform:scaleX(0.8418);transform-origin:0 0;">28.01.2026 14:11</div>
<div style="position:absolute;left:323.80px;top:233.31px;font-family:'Liberation Sans',sans-serif;font-weight:400;color:#707070;font-size:5.500px;line-height:5.500px;white-space:pre;-webkit-text-stroke:0.02px #707070;transform:scaleX(0.8338);transform-origin:0 0;">26.01.2026 22:33</div>
<div style="position:absolute;left:323.80px;top:244.82px;font-family:'Liberation Sans',sans-serif;font-weight:400;color:#707070;font-size:5.500px;line-height:5.500px;white-space:pre;-webkit-text-stroke:0.02px #707070;transform:scaleX(0.8338);transform-origin:0 0;">27.01.2026 21:01</div>
<div style="position:absolute;left:323.80px;top:257.38px;font-family:'Liberation Sans',sans-serif;font-weight:400;color:#707070;font-size:5.500px;line-height:5.500px;white-space:pre;-webkit-text-stroke:0.02px #707070;transform:scaleX(0.8338);transform-origin:0 0;">27.08.2025 21:24</div>
<svg style="position:absolute;left:213px;top:184px" width="10" height="9"><path d="M1.3 1.6 h2.6 l0.8 0.9 h4.3 v5.3 h-7.7 z" fill="#eab83a"/><rect x="1.3" y="3.2" width="7.7" height="4.6" fill="#fcd462"/></svg>
<div style="position:absolute;left:223.00px;top:186.40px;font-family:'Liberation Sans',sans-serif;font-weight:400;color:#1e2536;font-size:5.500px;line-height:5.500px;white-space:pre;-webkit-text-stroke:0.08px #1e2536;transform:scaleX(0.8799);transform-origin:0 0;">Word2Excel</div>
<svg style="position:absolute;left:214.00px;top:197.00px" width="7" height="7"><rect x="2" y="0.4" width="4.6" height="6" rx="0.4" fill="#fff" stroke="#8f8f8f" stroke-width="0.5"/><path d="M3.9 2.2 h2 M3.9 3.3 h2 M3.9 4.4 h2" stroke="#b9c7dc" stroke-width="0.4"/><rect x="0.3" y="1.6" width="3.8" height="3.6" rx="0.4" fill="#2b63c6"/><path d="M0.9 2.5 L1.5 4.4 L2.2 3 L2.9 4.4 L3.5 2.5" fill="none" stroke="#fff" stroke-width="0.4"/></svg>
<div style="position:absolute;left:223.00px;top:198.07px;font-family:'Liberation Sans',sans-serif;font-weight:400;color:#1e2536;font-size:5.500px;line-height:5.500px;white-space:pre;-webkit-text-stroke:0.08px #1e2536;transform:scaleX(0.8570);transform-origin:0 0;">03_1371_ПОС-ПЗ.docx</div>
<svg style="position:absolute;left:214.00px;top:244.30px" width="7" height="7"><rect x="2" y="0.4" width="4.6" height="6" rx="0.4" fill="#fff" stroke="#8f8f8f" stroke-width="0.5"/><path d="M3.9 2.2 h2 M3.9 3.3 h2 M3.9 4.4 h2" stroke="#b9c7dc" stroke-width="0.4"/><rect x="0.3" y="1.6" width="3.8" height="3.6" rx="0.4" fill="#2b63c6"/><path d="M0.9 2.5 L1.5 4.4 L2.2 3 L2.9 4.4 L3.5 2.5" fill="none" stroke="#fff" stroke-width="0.4"/></svg>
<div style="position:absolute;left:222.70px;top:245.81px;font-family:'Liberation Sans',sans-serif;font-weight:400;color:#1e2536;font-size:5.500px;line-height:5.500px;white-space:pre;-webkit-text-stroke:0.08px #1e2536;transform:scaleX(0.9328);transform-origin:0 0;">ПЗ ППР.docx</div>
<svg style="position:absolute;left:214.00px;top:256.00px" width="7" height="7"><rect x="2" y="0.4" width="4.6" height="6" rx="0.4" fill="#fff" stroke="#8f8f8f" stroke-width="0.5"/><path d="M3.9 2.2 h2 M3.9 3.3 h2 M3.9 4.4 h2" stroke="#b9c7dc" stroke-width="0.4"/><rect x="0.3" y="1.6" width="3.8" height="3.6" rx="0.4" fill="#2b63c6"/><path d="M0.9 2.5 L1.5 4.4 L2.2 3 L2.9 4.4 L3.5 2.5" fill="none" stroke="#fff" stroke-width="0.4"/></svg>
<div style="position:absolute;left:222.70px;top:256.99px;font-family:'Liberation Sans',sans-serif;font-weight:400;color:#1e2536;font-size:5.500px;line-height:5.500px;white-space:pre;-webkit-text-stroke:0.08px #1e2536;transform:scaleX(0.9255);transform-origin:0 0;">ПЗ.docx</div>
<div style="position:absolute;left:212.0px;top:208.0px;width:6.8999999999999995px;height:6.4px;background:#b9cbe6"></div>
<div style="position:absolute;left:218.8px;top:208.0px;width:6.8999999999999995px;height:6.4px;background:#d6d6d6"></div>
<div style="position:absolute;left:225.6px;top:208.0px;width:6.8999999999999995px;height:6.4px;background:#d6d3d4"></div>
<div style="position:absolute;left:232.4px;top:208.0px;width:6.8999999999999995px;height:6.4px;background:#d5d5d5"></div>
<div style="position:absolute;left:239.2px;top:208.0px;width:6.8999999999999995px;height:6.4px;background:#d9d9d9"></div>
<div style="position:absolute;left:246.0px;top:208.0px;width:6.8999999999999995px;height:6.4px;background:#d3d3d3"></div>
<div style="position:absolute;left:252.8px;top:208.0px;width:6.8999999999999995px;height:6.4px;background:#d6d6d6"></div>
<div style="position:absolute;left:259.6px;top:208.0px;width:6.8999999999999995px;height:6.4px;background:#d8d8d8"></div>
<div style="position:absolute;left:266.4px;top:208.0px;width:6.8999999999999995px;height:6.4px;background:#d8d8d8"></div>
<div style="position:absolute;left:273.2px;top:208.0px;width:6.8999999999999995px;height:6.4px;background:#d4d4d4"></div>
<div style="position:absolute;left:280.0px;top:208.0px;width:6.8999999999999995px;height:6.4px;background:#d8d8d8"></div>
<div style="position:absolute;left:286.8px;top:208.0px;width:6.8999999999999995px;height:6.4px;background:#dbdbdb"></div>
<div style="position:absolute;left:293.6px;top:208.0px;width:6.8999999999999995px;height:6.4px;background:#d8d8d8"></div>
<div style="position:absolute;left:300.4px;top:208.0px;width:6.8999999999999995px;height:6.4px;background:#d2d2d2"></div>
<div style="position:absolute;left:307.2px;top:208.0px;width:6.8999999999999995px;height:6.4px;background:#d9d9d9"></div>
<div style="position:absolute;left:314.0px;top:208.0px;width:6.8999999999999995px;height:6.4px;background:#f5f5f5"></div>
<div style="position:absolute;left:212.0px;top:214.4px;width:6.8999999999999995px;height:6.4px;background:#f6f6f6"></div>
<div style="position:absolute;left:218.8px;top:214.4px;width:6.8999999999999995px;height:6.4px;background:#f3f3f3"></div>
<div style="position:absolute;left:225.6px;top:214.4px;width:6.8999999999999995px;height:6.4px;background:#fbfbfb"></div>
<div style="position:absolute;left:232.4px;top:214.4px;width:6.8999999999999995px;height:6.4px;background:#fdfdfd"></div>
<div style="position:absolute;left:239.2px;top:214.4px;width:6.8999999999999995px;height:6.4px;background:#f9f9f9"></div>
<div style="position:absolute;left:246.0px;top:214.4px;width:6.8999999999999995px;height:6.4px;background:#fcfcfc"></div>
<div style="position:absolute;left:252.8px;top:214.4px;width:6.8999999999999995px;height:6.4px;background:#fcfcfc"></div>
<div style="position:absolute;left:259.6px;top:214.4px;width:6.8999999999999995px;height:6.4px;background:#fbfbfb"></div>
<div style="position:absolute;left:266.4px;top:214.4px;width:6.8999999999999995px;height:6.4px;background:#f8f8f8"></div>
<div style="position:absolute;left:273.2px;top:214.4px;width:6.8999999999999995px;height:6.4px;background:#fdfdfd"></div>
<div style="position:absolute;left:280.0px;top:214.4px;width:6.8999999999999995px;height:6.4px;background:#fafafa"></div>
<div style="position:absolute;left:286.8px;top:214.4px;width:6.8999999999999995px;height:6.4px;background:#f8f8f8"></div>
<div style="position:absolute;left:293.6px;top:214.4px;width:6.8999999999999995px;height:6.4px;background:#fbfbfb"></div>
<div style="position:absolute;left:300.4px;top:214.4px;width:6.8999999999999995px;height:6.4px;background:#f9f9f9"></div>
<div style="position:absolute;left:212.0px;top:221.0px;width:6.8999999999999995px;height:6.7px;background:#bccde6"></div>
<div style="position:absolute;left:218.8px;top:221.0px;width:6.8999999999999995px;height:6.7px;background:#d6d6d6"></div>
<div style="position:absolute;left:225.6px;top:221.0px;width:6.8999999999999995px;height:6.7px;background:#d4d2d3"></div>
<div style="position:absolute;left:232.4px;top:221.0px;width:6.8999999999999995px;height:6.7px;background:#d4d4d4"></div>
<div style="position:absolute;left:239.2px;top:221.0px;width:6.8999999999999995px;height:6.7px;background:#d8d8d8"></div>
<div style="position:absolute;left:246.0px;top:221.0px;width:6.8999999999999995px;height:6.7px;background:#d3d3d3"></div>
<div style="position:absolute;left:252.8px;top:221.0px;width:6.8999999999999995px;height:6.7px;background:#ededed"></div>
<div style="position:absolute;left:212.0px;top:227.7px;width:6.8999999999999995px;height:6.7px;background:#eef1f6"></div>
<div style="position:absolute;left:218.8px;top:227.7px;width:6.8999999999999995px;height:6.7px;background:#f1f1f1"></div>
<div style="position:absolute;left:225.6px;top:227.7px;width:6.8999999999999995px;height:6.7px;background:#f4f4f4"></div>
<div style="position:absolute;left:232.4px;top:227.7px;width:6.8999999999999995px;height:6.7px;background:#f3f3f3"></div>
<div style="position:absolute;left:239.2px;top:227.7px;width:6.8999999999999995px;height:6.7px;background:#f2f2f2"></div>
<div style="position:absolute;left:246.0px;top:227.7px;width:6.8999999999999995px;height:6.7px;background:#f1f1f1"></div>
<div style="position:absolute;left:252.8px;top:227.7px;width:6.8999999999999995px;height:6.7px;background:#f5f5f5"></div>
<div style="position:absolute;left:259.6px;top:227.7px;width:6.8999999999999995px;height:6.7px;background:#ececec"></div>
<div style="position:absolute;left:266.4px;top:227.7px;width:6.8999999999999995px;height:6.7px;background:#f3f3f3"></div>
<div style="position:absolute;left:273.2px;top:227.7px;width:6.8999999999999995px;height:6.7px;background:#f2f2f2"></div>
<div style="position:absolute;left:280.0px;top:227.7px;width:6.8999999999999995px;height:6.7px;background:#eeeeee"></div>
<div style="position:absolute;left:286.8px;top:227.7px;width:6.8999999999999995px;height:6.7px;background:#f6f6f6"></div>
<div style="position:absolute;left:212.0px;top:234.4px;width:6.8999999999999995px;height:6.4px;background:#c3d2e8"></div>
<div style="position:absolute;left:218.8px;top:234.4px;width:6.8999999999999995px;height:6.4px;background:#d9dde2"></div>
<div style="position:absolute;left:225.6px;top:234.4px;width:6.8999999999999995px;height:6.4px;background:#d0d0d0"></div>
<div style="position:absolute;left:232.4px;top:234.4px;width:6.8999999999999995px;height:6.4px;background:#d6d6d6"></div>
<div style="position:absolute;left:239.2px;top:234.4px;width:6.8999999999999995px;height:6.4px;background:#d8d8d8"></div>
<div style="position:absolute;left:246.0px;top:234.4px;width:6.8999999999999995px;height:6.4px;background:#d2d2d2"></div>
<div style="position:absolute;left:252.8px;top:234.4px;width:6.8999999999999995px;height:6.4px;background:#d8d8d8"></div>
<div style="position:absolute;left:259.6px;top:234.4px;width:6.8999999999999995px;height:6.4px;background:#dadada"></div>
<div style="position:absolute;left:266.4px;top:234.4px;width:6.8999999999999995px;height:6.4px;background:#d5d5d5"></div>
<div style="position:absolute;left:273.2px;top:234.4px;width:6.8999999999999995px;height:6.4px;background:#d0d0d0"></div>
<div style="position:absolute;left:280.0px;top:234.4px;width:6.8999999999999995px;height:6.4px;background:#d6d6d6"></div>
<div style="position:absolute;left:286.8px;top:234.4px;width:6.8999999999999995px;height:6.4px;background:#d4d4d4"></div>
<div style="position:absolute;left:293.6px;top:234.4px;width:6.8999999999999995px;height:6.4px;background:#d0d0d0"></div>
<div style="position:absolute;left:300.4px;top:234.4px;width:6.8999999999999995px;height:6.4px;background:#f4f4f4"></div>
<div style="position:absolute;left:451.00px;top:178.00px;font-family:'Liberation Serif',serif;font-weight:700;color:#111;font-size:7.978px;line-height:7.978px;white-space:pre;-webkit-text-stroke:0.08px #111;">ОГЛАВЛЕНИЕ</div>
<div style="position:absolute;left:380.80px;top:190.66px;font-family:'Liberation Serif',serif;font-weight:400;color:#2f2fea;font-size:7.850px;line-height:7.850px;white-space:pre;text-decoration:underline;text-decoration-thickness:0.45px;text-underline-offset:0.9px;text-decoration-skip-ink:none;-webkit-text-stroke:0.08px #2f2fea;">1.</div>
<div style="position:absolute;left:394.60px;top:190.96px;font-family:'Liberation Serif',serif;font-weight:400;color:#2f2fea;font-size:7.859px;line-height:7.859px;white-space:pre;text-decoration:underline;text-decoration-thickness:0.45px;text-underline-offset:0.9px;text-decoration-skip-ink:none;-webkit-text-stroke:0.08px #2f2fea;">ОБЩИЕ СВЕДЕНИЯ</div>
<div style="position:absolute;left:380.80px;top:202.58px;font-family:'Liberation Serif',serif;font-weight:400;color:#2f2fea;font-size:7.850px;line-height:7.850px;white-space:pre;text-decoration:underline;text-decoration-thickness:0.45px;text-underline-offset:0.9px;text-decoration-skip-ink:none;-webkit-text-stroke:0.08px #2f2fea;">2.</div>
<div style="position:absolute;left:394.60px;top:203.92px;font-family:'Liberation Serif',serif;font-weight:400;color:#2f2fea;font-size:7.887px;line-height:7.887px;white-space:pre;text-decoration:underline;text-decoration-thickness:0.45px;text-underline-offset:0.9px;text-decoration-skip-ink:none;-webkit-text-stroke:0.08px #2f2fea;">НОРМЫ ПРОЕКТИРОВАНИЯ</div>
<div style="position:absolute;left:380.80px;top:215.66px;font-family:'Liberation Serif',serif;font-weight:400;color:#2f2fea;font-size:7.850px;line-height:7.850px;white-space:pre;text-decoration:underline;text-decoration-thickness:0.45px;text-underline-offset:0.9px;text-decoration-skip-ink:none;-webkit-text-stroke:0.08px #2f2fea;">3.</div>
<div style="position:absolute;left:395.00px;top:216.08px;font-family:'Liberation Serif',serif;font-weight:400;color:#2f2fea;font-size:7.952px;line-height:7.952px;white-space:pre;text-decoration:underline;text-decoration-thickness:0.45px;text-underline-offset:0.9px;text-decoration-skip-ink:none;-webkit-text-stroke:0.08px #2f2fea;">ХАРАКТЕРИСТИКА ТРАССЫ ЛИНЕЙНОГО</div>
<div style="position:absolute;left:380.80px;top:225.26px;font-family:'Liberation Serif',serif;font-weight:400;color:#2f2fea;font-size:7.987px;line-height:7.987px;white-space:pre;text-decoration:underline;text-decoration-thickness:0.45px;text-underline-offset:0.9px;text-decoration-skip-ink:none;-webkit-text-stroke:0.08px #2f2fea;">ОБЪЕКТА, РАЙОНА ЕГО СТРОИТЕЛЬСТВА</div>
<div style="position:absolute;left:388.00px;top:237.26px;font-family:'Liberation Serif',serif;font-weight:400;color:#2f2fea;font-size:7.850px;line-height:7.850px;white-space:pre;text-decoration:underline;text-decoration-thickness:0.45px;text-underline-offset:0.9px;text-decoration-skip-ink:none;-webkit-text-stroke:0.08px #2f2fea;">3.1.</div>
<div style="position:absolute;left:408.00px;top:236.64px;font-family:'Liberation Serif',serif;font-weight:400;color:#2f2fea;font-size:7.886px;line-height:7.886px;white-space:pre;text-decoration:underline;text-decoration-thickness:0.45px;text-underline-offset:0.9px;text-decoration-skip-ink:none;-webkit-text-stroke:0.08px #2f2fea;">Географическое и административное положение</div>
<div style="position:absolute;left:388.00px;top:257.12px;font-family:'Liberation Serif',serif;font-weight:400;color:#2f2fea;font-size:7.850px;line-height:7.850px;white-space:pre;text-decoration:underline;text-decoration-thickness:0.45px;text-underline-offset:0.9px;text-decoration-skip-ink:none;-webkit-text-stroke:0.08px #2f2fea;">3.2.</div>
<div style="position:absolute;left:408.00px;top:256.65px;font-family:'Liberation Serif',serif;font-weight:400;color:#2f2fea;font-size:7.880px;line-height:7.880px;white-space:pre;text-decoration:underline;text-decoration-thickness:0.45px;text-underline-offset:0.9px;text-decoration-skip-ink:none;-webkit-text-stroke:0.08px #2f2fea;">Гидрологическая изученность</div>
<div style="position:absolute;left:388.00px;top:267.26px;font-family:'Liberation Serif',serif;font-weight:400;color:#2f2fea;font-size:7.850px;line-height:7.850px;white-space:pre;text-decoration:underline;text-decoration-thickness:0.45px;text-underline-offset:0.9px;text-decoration-skip-ink:none;-webkit-text-stroke:0.08px #2f2fea;">3.3.</div>
<div style="position:absolute;left:408.00px;top:266.76px;font-family:'Liberation Serif',serif;font-weight:400;color:#2f2fea;font-size:7.843px;line-height:7.843px;white-space:pre;text-decoration:underline;text-decoration-thickness:0.45px;text-underline-offset:0.9px;text-decoration-skip-ink:none;-webkit-text-stroke:0.08px #2f2fea;">Уровневый режим</div>
<div style="position:absolute;left:388.00px;top:277.25px;font-family:'Liberation Serif',serif;font-weight:400;color:#2f2fea;font-size:7.850px;line-height:7.850px;white-space:pre;text-decoration:underline;text-decoration-thickness:0.45px;text-underline-offset:0.9px;text-decoration-skip-ink:none;-webkit-text-stroke:0.08px #2f2fea;">3.4.</div>
<div style="position:absolute;left:408.00px;top:276.71px;font-family:'Liberation Serif',serif;font-weight:400;color:#2f2fea;font-size:7.891px;line-height:7.891px;white-space:pre;text-decoration:underline;text-decoration-thickness:0.45px;text-underline-offset:0.9px;text-decoration-skip-ink:none;-webkit-text-stroke:0.08px #2f2fea;">Ледовый режим</div>
<div style="position:absolute;left:388.00px;top:287.83px;font-family:'Liberation Serif',serif;font-weight:400;color:#2f2fea;font-size:7.850px;line-height:7.850px;white-space:pre;text-decoration:underline;text-decoration-thickness:0.45px;text-underline-offset:0.9px;text-decoration-skip-ink:none;-webkit-text-stroke:0.08px #2f2fea;">3.5.</div>
<div style="position:absolute;left:408.00px;top:287.09px;font-family:'Liberation Serif',serif;font-weight:400;color:#2f2fea;font-size:7.821px;line-height:7.821px;white-space:pre;text-decoration:underline;text-decoration-thickness:0.45px;text-underline-offset:0.9px;text-decoration-skip-ink:none;-webkit-text-stroke:0.08px #2f2fea;">Расчетные гидрологические характеристики</div>
<div style="position:absolute;left:388.00px;top:297.76px;font-family:'Liberation Serif',serif;font-weight:400;color:#2f2fea;font-size:7.850px;line-height:7.850px;white-space:pre;text-decoration:underline;text-decoration-thickness:0.45px;text-underline-offset:0.9px;text-decoration-skip-ink:none;-webkit-text-stroke:0.08px #2f2fea;">3.6.</div>
<div style="position:absolute;left:408.00px;top:297.08px;font-family:'Liberation Serif',serif;font-weight:400;color:#2f2fea;font-size:7.880px;line-height:7.880px;white-space:pre;text-decoration:underline;text-decoration-thickness:0.45px;text-underline-offset:0.9px;text-decoration-skip-ink:none;-webkit-text-stroke:0.08px #2f2fea;">Климатическая характеристика</div>
<div style="position:absolute;left:388.00px;top:307.73px;font-family:'Liberation Serif',serif;font-weight:400;color:#2f2fea;font-size:7.850px;line-height:7.850px;white-space:pre;text-decoration:underline;text-decoration-thickness:0.45px;text-underline-offset:0.9px;text-decoration-skip-ink:none;-webkit-text-stroke:0.08px #2f2fea;">3.7.</div>
<div style="position:absolute;left:408.00px;top:307.47px;font-family:'Liberation Serif',serif;font-weight:400;color:#2f2fea;font-size:7.837px;line-height:7.837px;white-space:pre;text-decoration:underline;text-decoration-thickness:0.45px;text-underline-offset:0.9px;text-decoration-skip-ink:none;-webkit-text-stroke:0.08px #2f2fea;">Описание существующего моста</div>
<div style="position:absolute;left:388.00px;top:318.37px;font-family:'Liberation Serif',serif;font-weight:400;color:#2f2fea;font-size:7.850px;line-height:7.850px;white-space:pre;text-decoration:underline;text-decoration-thickness:0.45px;text-underline-offset:0.9px;text-decoration-skip-ink:none;-webkit-text-stroke:0.08px #2f2fea;">3.7.1.</div>
<div style="position:absolute;left:414.80px;top:316.91px;font-family:'Liberation Serif',serif;font-weight:400;color:#2f2fea;font-size:7.826px;line-height:7.826px;white-space:pre;text-decoration:underline;text-decoration-thickness:0.45px;text-underline-offset:0.9px;text-decoration-skip-ink:none;-webkit-text-stroke:0.08px #2f2fea;">Проезжая часть</div>
<div style="position:absolute;left:388.00px;top:327.80px;font-family:'Liberation Serif',serif;font-weight:400;color:#2f2fea;font-size:7.850px;line-height:7.850px;white-space:pre;text-decoration:underline;text-decoration-thickness:0.45px;text-underline-offset:0.9px;text-decoration-skip-ink:none;-webkit-text-stroke:0.08px #2f2fea;">3.7.2.</div>
<div style="position:absolute;left:414.80px;top:326.97px;font-family:'Liberation Serif',serif;font-weight:400;color:#2f2fea;font-size:7.802px;line-height:7.802px;white-space:pre;text-decoration:underline;text-decoration-thickness:0.45px;text-underline-offset:0.9px;text-decoration-skip-ink:none;-webkit-text-stroke:0.08px #2f2fea;">Пролетные строения</div>
<div style="position:absolute;left:388.00px;top:338.54px;font-family:'Liberation Serif',serif;font-weight:400;color:#2f2fea;font-size:7.850px;line-height:7.850px;white-space:pre;text-decoration:underline;text-decoration-thickness:0.45px;text-underline-offset:0.9px;text-decoration-skip-ink:none;-webkit-text-stroke:0.08px #2f2fea;">3.7.3.</div>
<div style="position:absolute;left:414.80px;top:337.67px;font-family:'Liberation Serif',serif;font-weight:400;color:#2f2fea;font-size:7.834px;line-height:7.834px;white-space:pre;text-decoration:underline;text-decoration-thickness:0.45px;text-underline-offset:0.9px;text-decoration-skip-ink:none;-webkit-text-stroke:0.08px #2f2fea;">Опорные части и опоры</div>
<div style="position:absolute;left:388.00px;top:348.81px;font-family:'Liberation Serif',serif;font-weight:400;color:#2f2fea;font-size:7.850px;line-height:7.850px;white-space:pre;text-decoration:underline;text-decoration-thickness:0.45px;text-underline-offset:0.9px;text-decoration-skip-ink:none;-webkit-text-stroke:0.08px #2f2fea;">3.8.</div>
<div style="position:absolute;left:408.00px;top:348.10px;font-family:'Liberation Serif',serif;font-weight:400;color:#2f2fea;font-size:7.835px;line-height:7.835px;white-space:pre;text-decoration:underline;text-decoration-thickness:0.45px;text-underline-offset:0.9px;text-decoration-skip-ink:none;-webkit-text-stroke:0.08px #2f2fea;">Описание зданий, строений и сооружений,</div>
<div style="position:absolute;left:388.00px;top:247.21px;font-family:'Liberation Serif',serif;font-weight:400;color:#2f2fea;font-size:7.854px;line-height:7.854px;white-space:pre;text-decoration:underline;text-decoration-thickness:0.45px;text-underline-offset:0.9px;text-decoration-skip-ink:none;-webkit-text-stroke:0.08px #2f2fea;">объекта</div>
<div style="position:absolute;left:388.00px;top:358.01px;font-family:'Liberation Serif',serif;font-weight:400;color:#2f2fea;font-size:8.010px;line-height:8.010px;white-space:pre;text-decoration:underline;text-decoration-thickness:0.45px;text-underline-offset:0.9px;text-decoration-skip-ink:none;-webkit-text-stroke:0.08px #2f2fea;">проектируемых в составе линейного объекта.</div>
<div style="position:absolute;left:388.00px;top:367.91px;font-family:'Liberation Serif',serif;font-weight:400;color:#2f2fea;font-size:7.765px;line-height:7.765px;white-space:pre;text-decoration:underline;text-decoration-thickness:0.45px;text-underline-offset:0.9px;text-decoration-skip-ink:none;-webkit-text-stroke:0.08px #2f2fea;">Проектируемый мост</div>
<div style="position:absolute;left:366.6px;top:378px;width:223.7px;height:8.7px;overflow:hidden">
<div style="position:absolute;left:14.20px;top:5.03px;font-family:'Liberation Serif',serif;font-weight:400;color:#2f2fea;font-size:7.850px;line-height:7.850px;white-space:pre;text-decoration:underline;text-decoration-thickness:0.45px;text-underline-offset:0.9px;text-decoration-skip-ink:none;-webkit-text-stroke:0.08px #2f2fea;">4.</div>
<div style="position:absolute;left:28.60px;top:5.46px;font-family:'Liberation Serif',serif;font-weight:400;color:#2f2fea;font-size:7.887px;line-height:7.887px;white-space:pre;text-decoration:underline;text-decoration-thickness:0.45px;text-underline-offset:0.9px;text-decoration-skip-ink:none;-webkit-text-stroke:0.08px #2f2fea;">ТЕХНИКО-ЭКОНОМИЧЕСКИЕ ПОКАЗАТЕЛИ</div>
</div>
<div style="position:absolute;left:153.60px;top:392.89px;font-family:'Liberation Sans',sans-serif;font-weight:400;color:#1e2536;font-size:5.500px;line-height:5.500px;white-space:pre;-webkit-text-stroke:0.08px #1e2536;transform:scaleX(0.8927);transform-origin:0 0;">Имя файла:</div>
<div style="position:absolute;left:182.9px;top:390.8px;width:322.2px;height:9.4px;background:#fff;border:0.6px solid #bcbcbc;border-bottom-color:#8a8a8a;box-sizing:border-box"></div>
<div style="position:absolute;left:185.00px;top:393.27px;font-family:'Liberation Sans',sans-serif;font-weight:400;color:#222;font-size:5.500px;line-height:5.500px;white-space:pre;-webkit-text-stroke:0.08px #222;transform:scaleX(0.8655);transform-origin:0 0;">03_1371_ПОС-ПЗ.docx</div>
<svg style="position:absolute;left:499px;top:393px" width="6" height="5"><path d="M1 1.3 L2.8 3.1 L4.6 1.3" fill="none" stroke="#888" stroke-width="0.5"/></svg>
<div style="position:absolute;left:510.5px;top:390.8px;width:79.1px;height:9.4px;background:#fcfcfc;border:0.6px solid #e0e0e0;border-radius:1.5px;box-sizing:border-box"></div>
<div style="position:absolute;left:512.30px;top:393.06px;font-family:'Liberation Sans',sans-serif;font-weight:400;color:#222;font-size:5.500px;line-height:5.500px;white-space:pre;-webkit-text-stroke:0.08px #222;transform:scaleX(0.9591);transform-origin:0 0;">Документы Word (*.doc;*.doc</div>
<svg style="position:absolute;left:584px;top:393px" width="6" height="5"><path d="M1 1.3 L2.6 2.9 L4.2 1.3" fill="none" stroke="#888" stroke-width="0.5"/></svg>
<div style="position:absolute;left:477.00px;top:406.22px;font-family:'Liberation Sans',sans-serif;font-weight:400;color:#333;font-size:5.500px;line-height:5.500px;white-space:pre;-webkit-text-stroke:0.08px #333;transform:scaleX(0.9185);transform-origin:0 0;">Сервис</div>
<svg style="position:absolute;left:500px;top:406px" width="5" height="5"><path d="M0.9 1.4 L4.1 1.4 L2.5 3 Z" fill="#333"/></svg>
<div style="position:absolute;left:511.2px;top:403.6px;width:36.4px;height:9.4px;background:#fdfdfd;border:0.7px solid #7eaee0;border-bottom:0.9px solid #2f7fcf;border-radius:2px;box-sizing:border-box"></div>
<div style="position:absolute;left:526.20px;top:406.01px;font-family:'Liberation Sans',sans-serif;font-weight:400;color:#222;font-size:5.500px;line-height:5.500px;white-space:pre;-webkit-text-stroke:0.08px #222;transform:scaleX(0.8844);transform-origin:0 0;">Да</div>
<div style="position:absolute;left:553.4px;top:403.6px;width:36.2px;height:9.4px;background:#fdfdfd;border:0.6px solid #dcdcdc;border-bottom-color:#c4c4c4;border-radius:2px;box-sizing:border-box"></div>
<div style="position:absolute;left:562.70px;top:406.38px;font-family:'Liberation Sans',sans-serif;font-weight:400;color:#222;font-size:5.500px;line-height:5.500px;white-space:pre;-webkit-text-stroke:0.08px #222;transform:scaleX(0.9020);transform-origin:0 0;">Отмена</div>
<svg style="position:absolute;left:589px;top:413px" width="8" height="8"><g fill="#b5b5b5"><rect x="5.2" y="2.2" width="0.8" height="0.8"/><rect x="3.6" y="3.8" width="0.8" height="0.8"/><rect x="5.2" y="3.8" width="0.8" height="0.8"/><rect x="2.0" y="5.4" width="0.8" height="0.8"/><rect x="3.6" y="5.4" width="0.8" height="0.8"/><rect x="5.2" y="5.4" width="0.8" height="0.8"/></g></svg>
<div style="position:absolute;left:90.4px;top:107.8px;width:123.8px;height:32.2px;border:2.1px solid #e3322e;border-radius:3px;box-sizing:border-box"></div>
</body></html>
